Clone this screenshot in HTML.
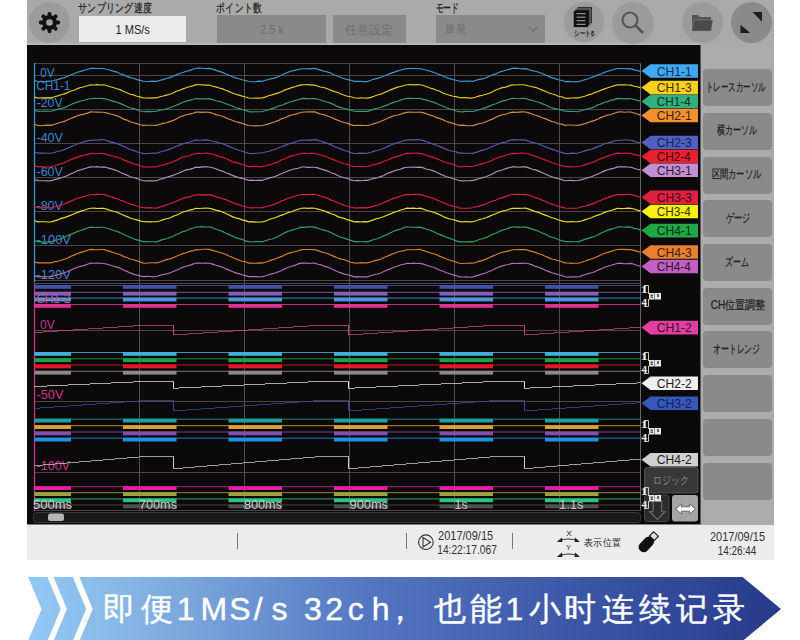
<!DOCTYPE html>
<html><head><meta charset="utf-8">
<style>
*{margin:0;padding:0;box-sizing:border-box}
html,body{width:800px;height:640px;overflow:hidden;background:#fff;font-family:"Liberation Sans", sans-serif}
.a{position:absolute}
.circ{position:absolute;border-radius:50%;background:#9b9b9b}
.btn{position:absolute;left:703px;width:69px;height:37px;background:#8a8a8a;border-radius:4px}
</style></head><body>
<div class="a" style="left:27px;top:0;width:747px;height:45px;background:#aaaaaa"></div>
<div class="a" style="left:27px;top:43px;width:673px;height:2px;background:#b8b8b8"></div>
<div class="a" style="left:700px;top:45px;width:74px;height:480px;background:#acacac"></div>
<div class="a" style="left:27px;top:524.5px;width:747px;height:35px;background:#ececec"></div>
<div class="circ" style="left:29px;top:2px;width:41px;height:41px"></div>
<svg class="a" style="left:37.4px;top:10px" width="25" height="25" viewBox="-12.5 -12.5 25 25"><g fill="#111"><rect x="-1.9" y="-10.6" width="3.8" height="6" rx="1.6" transform="rotate(0)"/><rect x="-1.9" y="-10.6" width="3.8" height="6" rx="1.6" transform="rotate(45)"/><rect x="-1.9" y="-10.6" width="3.8" height="6" rx="1.6" transform="rotate(90)"/><rect x="-1.9" y="-10.6" width="3.8" height="6" rx="1.6" transform="rotate(135)"/><rect x="-1.9" y="-10.6" width="3.8" height="6" rx="1.6" transform="rotate(180)"/><rect x="-1.9" y="-10.6" width="3.8" height="6" rx="1.6" transform="rotate(225)"/><rect x="-1.9" y="-10.6" width="3.8" height="6" rx="1.6" transform="rotate(270)"/><rect x="-1.9" y="-10.6" width="3.8" height="6" rx="1.6" transform="rotate(315)"/><circle r="7.4"/></g><circle r="3.3" fill="#a0a0a0"/></svg>
<div class="a" style="left:79.4px;top:15.6px;width:106.6px;height:26.8px;background:#ececec"></div>
<div class="a" style="left:217px;top:15px;width:109px;height:28px;background:#8a8a8a"></div>
<div class="a" style="left:333px;top:15px;width:73px;height:28px;background:#8a8a8a"></div>
<div class="a" style="left:435.5px;top:14.6px;width:109.5px;height:28.4px;background:#8a8a8a"></div>
<svg class="a" style="left:0;top:0" width="560" height="45"><path d="M528.5,26.8 L533.2,31.2 L538,26.8" fill="none" stroke="#747474" stroke-width="1.3"/></svg>
<div class="circ" style="left:564px;top:1.5px;width:40.4px;height:40.4px"></div>
<svg class="a" style="left:0;top:0" width="800" height="45">
<rect x="577.6" y="7" width="14.4" height="16.2" fill="#333"/>
<rect x="576.3" y="8.3" width="14.4" height="16.2" fill="#222" stroke="#888" stroke-width="0.5"/>
<rect x="575" y="9.6" width="14.4" height="16.2" fill="#1a1a1a" stroke="#888" stroke-width="0.5"/>
<rect x="573.7" y="10.9" width="14.4" height="16.2" fill="#111"/>
<g stroke="#b0b0b0" stroke-width="1"><line x1="576.5" y1="13.7" x2="585.5" y2="13.7"/><line x1="576.5" y1="17.2" x2="585.5" y2="17.2"/><line x1="576.5" y1="20.7" x2="585.5" y2="20.7"/><line x1="576.5" y1="24.3" x2="585.5" y2="24.3"/></g>
</svg>
<div class="circ" style="left:612px;top:1.5px;width:42px;height:42px"></div>
<svg class="a" style="left:618px;top:8px" width="30" height="30"><circle cx="12" cy="12" r="7.5" fill="none" stroke="#555" stroke-width="2.2"/><line x1="17.5" y1="17.5" x2="25" y2="25" stroke="#555" stroke-width="2.6"/></svg>
<div class="circ" style="left:681.5px;top:1.5px;width:41px;height:41px"></div>
<svg class="a" style="left:690px;top:13px" width="25" height="20"><path d="M2,2 H8 L10,4 H21 V18 H2 Z" fill="#555"/><path d="M4,7 H23 L21,18 H2 Z" fill="#4a4a4a" stroke="#888" stroke-width="0.5"/></svg>
<div class="circ" style="left:730.5px;top:1.5px;width:41.5px;height:41.5px;background:#8a8a8a"></div>
<svg class="a" style="left:730px;top:0" width="42" height="45"><path d="M22.5,12 H32 V21.7 Z" fill="#251820"/><path d="M10.5,24.7 V33 H20.2 Z" fill="#251820"/></svg>
<div class="btn" style="top:69.2px"></div><div class="btn" style="top:112.9px"></div><div class="btn" style="top:156.6px"></div><div class="btn" style="top:200.3px"></div><div class="btn" style="top:244.0px"></div><div class="btn" style="top:287.7px"></div><div class="btn" style="top:331.4px"></div><div class="btn" style="top:375.1px"></div><div class="btn" style="top:418.8px"></div><div class="btn" style="top:462.5px"></div>
<svg class="a" style="left:0;top:0" width="800" height="640">
<rect x="27" y="45" width="673.5" height="479.5" fill="#0b0909"/>
<line x1="34.5" y1="63.5" x2="640.5" y2="63.5" stroke="#4e4646" stroke-width="1"/>
<line x1="34.5" y1="75.5" x2="640.5" y2="75.5" stroke="#4e4646" stroke-width="1"/>
<line x1="34.5" y1="109.5" x2="640.5" y2="109.5" stroke="#4e4646" stroke-width="1"/>
<line x1="34.5" y1="143.5" x2="640.5" y2="143.5" stroke="#4e4646" stroke-width="1"/>
<line x1="34.5" y1="177.5" x2="640.5" y2="177.5" stroke="#4e4646" stroke-width="1"/>
<line x1="34.5" y1="211.5" x2="640.5" y2="211.5" stroke="#4e4646" stroke-width="1"/>
<line x1="34.5" y1="245.5" x2="640.5" y2="245.5" stroke="#4e4646" stroke-width="1"/>
<line x1="34.5" y1="280.5" x2="640.5" y2="280.5" stroke="#4e4646" stroke-width="1"/>
<line x1="34.5" y1="283.5" x2="640.5" y2="283.5" stroke="#4e4646" stroke-width="1"/>
<line x1="34.5" y1="330.5" x2="640.5" y2="330.5" stroke="#4e4646" stroke-width="1"/>
<line x1="34.5" y1="401.5" x2="640.5" y2="401.5" stroke="#4e4646" stroke-width="1"/>
<line x1="34.5" y1="472.5" x2="640.5" y2="472.5" stroke="#4e4646" stroke-width="1"/>
<line x1="34.5" y1="510.5" x2="640.5" y2="510.5" stroke="#4e4646" stroke-width="1"/>
<line x1="139.5" y1="63.5" x2="139.5" y2="510.5" stroke="#504c4c" stroke-width="1"/>
<line x1="244.5" y1="63.5" x2="244.5" y2="510.5" stroke="#504c4c" stroke-width="1"/>
<line x1="349.5" y1="63.5" x2="349.5" y2="510.5" stroke="#504c4c" stroke-width="1"/>
<line x1="454.5" y1="63.5" x2="454.5" y2="510.5" stroke="#504c4c" stroke-width="1"/>
<line x1="559.5" y1="63.5" x2="559.5" y2="510.5" stroke="#504c4c" stroke-width="1"/>
<line x1="640.5" y1="63.5" x2="640.5" y2="510.5" stroke="#6a6464" stroke-width="1"/>
<line x1="34.5" y1="63" x2="34.5" y2="282" stroke="#3a9ad8" stroke-width="1.3"/>
<line x1="34.5" y1="283" x2="34.5" y2="511" stroke="#c83888" stroke-width="1.3"/>
<text transform="translate(40.20,76.50) scale(0.987,1)" font-size="12" font-family="'Liberation Sans', sans-serif" font-weight="normal" fill="#3a86cc">0V</text>
<text transform="translate(36.25,90.33) scale(0.987,1)" font-size="12" font-family="'Liberation Sans', sans-serif" font-weight="normal" fill="#3a86cc">CH1-1</text>
<text transform="translate(36.75,107.45) scale(1.018,1)" font-size="12" font-family="'Liberation Sans', sans-serif" font-weight="normal" fill="#3a86cc">-20V</text>
<text transform="translate(36.50,142.15) scale(1.040,1)" font-size="12" font-family="'Liberation Sans', sans-serif" font-weight="normal" fill="#3a86cc">-40V</text>
<text transform="translate(36.50,176.35) scale(1.040,1)" font-size="12" font-family="'Liberation Sans', sans-serif" font-weight="normal" fill="#3a86cc">-60V</text>
<text transform="translate(36.50,210.20) scale(1.040,1)" font-size="12" font-family="'Liberation Sans', sans-serif" font-weight="normal" fill="#3a86cc">-80V</text>
<text transform="translate(36.50,244.30) scale(1.078,1)" font-size="12" font-family="'Liberation Sans', sans-serif" font-weight="normal" fill="#3a86cc">-100V</text>
<text transform="translate(36.50,278.65) scale(1.069,1)" font-size="12" font-family="'Liberation Sans', sans-serif" font-weight="normal" fill="#3a86cc">-120V</text>
<text transform="translate(40.00,329.15) scale(1.000,1)" font-size="12" font-family="'Liberation Sans', sans-serif" font-weight="normal" fill="#c83888">0V</text>
<text transform="translate(36.50,399.20) scale(1.060,1)" font-size="12" font-family="'Liberation Sans', sans-serif" font-weight="normal" fill="#c83888">-50V</text>
<text transform="translate(36.50,470.40) scale(1.047,1)" font-size="12" font-family="'Liberation Sans', sans-serif" font-weight="normal" fill="#c83888">-100V</text>
<polyline points="34.5,80.3 38.0,81.5 41.3,81.3 44.6,81.7 47.9,81.1 51.2,81.2 54.5,80.3 57.8,79.6 61.1,78.4 64.4,77.7 67.7,76.3 70.9,74.7 74.2,73.7 77.5,72.3 80.8,71.4 84.1,70.3 87.4,69.5 90.7,68.3 94.0,68.3 97.3,68.5 100.6,68.5 103.9,68.5 107.2,69.5 110.5,70.3 113.8,71.4 117.1,72.1 120.4,73.7 123.7,74.9 126.9,76.4 130.2,77.6 133.5,78.3 136.8,79.6 140.1,80.4 143.4,81.2 146.7,81.5 150.0,81.4 153.3,81.1 156.6,81.3 159.9,80.3 163.2,79.6 166.5,78.3 169.8,77.6 173.1,76.3 176.3,74.9 179.6,73.5 182.9,72.5 186.2,71.2 189.5,70.6 192.8,69.2 196.1,68.3 199.4,68.2 202.7,68.3 206.0,68.6 209.3,68.4 212.6,69.1 215.9,70.4 219.2,71.4 222.5,72.4 225.8,74.0 229.1,75.3 232.3,76.7 235.6,77.9 238.9,78.7 242.2,79.7 245.5,80.5 248.8,81.5 252.1,81.7 255.4,81.7 258.7,81.2 262.0,81.4 265.3,80.3 268.6,79.5 271.9,78.6 275.2,77.9 278.5,76.5 281.8,75.1 285.0,73.4 288.3,72.1 291.6,71.0 294.9,70.4 298.2,69.5 301.5,68.7 304.8,68.7 308.1,68.8 311.4,68.6 314.7,68.4 318.0,69.4 321.3,70.4 324.6,71.3 327.9,72.1 331.2,73.2 334.5,75.1 337.7,76.3 341.0,77.5 344.3,78.7 347.6,79.6 350.9,80.3 354.2,81.4 357.5,81.4 360.8,81.3 364.1,81.6 367.4,81.6 370.7,80.3 374.0,79.3 377.3,78.4 380.6,77.5 383.9,76.0 387.1,74.8 390.4,73.4 393.7,72.4 397.0,71.1 400.3,70.3 403.6,69.3 406.9,68.6 410.2,68.5 413.5,68.3 416.8,68.7 420.1,68.5 423.4,69.5 426.7,70.2 430.0,71.2 433.3,72.3 436.6,73.5 439.9,74.8 443.1,76.0 446.4,77.5 449.7,78.6 453.0,79.6 456.3,80.3 459.6,81.2 462.9,81.3 466.2,81.0 469.5,81.1 472.8,81.3 476.1,80.3 479.4,79.4 482.7,78.9 486.0,77.8 489.3,76.2 492.6,74.7 495.8,73.9 499.1,72.3 502.4,71.3 505.7,70.2 509.0,69.4 512.3,68.4 515.6,68.2 518.9,68.5 522.2,68.8 525.5,68.6 528.8,69.7 532.1,70.6 535.4,71.2 538.7,72.3 542.0,73.5 545.2,74.7 548.5,76.4 551.8,77.6 555.1,78.6 558.4,79.8 561.7,80.5 565.0,81.6 568.3,81.4 571.6,81.8 574.9,81.9 578.2,81.6 581.5,80.8 584.8,79.7 588.1,78.7 591.4,77.5 594.7,76.4 598.0,74.8 601.2,73.7 604.5,72.4 607.8,71.3 611.1,70.2 614.4,69.2 617.7,68.5 621.0,68.5 624.3,68.5 627.6,68.8 630.9,68.7 634.1,69.9 637.3,70.5 640.5,71.4" fill="none" stroke="#4298cc" stroke-width="1.15"/>
<polyline points="34.5,97.1 38.0,98.1 41.3,97.8 44.6,97.8 47.9,97.7 51.2,97.8 54.5,96.7 57.8,95.9 61.1,94.8 64.4,93.9 67.7,92.6 70.9,91.0 74.2,90.2 77.5,88.6 80.8,87.5 84.1,86.7 87.4,85.8 90.7,84.8 94.0,85.0 97.3,84.7 100.6,85.0 103.9,84.8 107.2,85.8 110.5,86.8 113.8,87.8 117.1,88.8 120.4,89.9 123.7,91.5 126.9,92.7 130.2,94.3 133.5,94.9 136.8,96.3 140.1,96.9 143.4,98.0 146.7,98.0 150.0,98.1 153.3,97.9 156.6,97.9 159.9,96.8 163.2,96.0 166.5,95.1 169.8,94.2 173.1,93.0 176.3,91.3 179.6,90.2 182.9,88.9 186.2,87.7 189.5,86.7 192.8,85.9 196.1,84.7 199.4,84.8 202.7,84.9 206.0,85.1 209.3,85.0 212.6,86.2 215.9,86.9 219.2,88.0 222.5,88.9 225.8,90.3 229.1,91.6 232.3,93.0 235.6,94.2 238.9,95.1 242.2,96.1 245.5,97.0 248.8,98.0 252.1,98.2 255.4,98.0 258.7,98.1 262.0,97.9 265.3,97.1 268.6,95.7 271.9,94.9 275.2,93.9 278.5,92.9 281.8,91.6 285.0,89.9 288.3,88.9 291.6,87.6 294.9,86.8 298.2,85.6 301.5,84.9 304.8,84.8 308.1,84.7 311.4,85.1 314.7,85.1 318.0,86.2 321.3,87.3 324.6,87.8 327.9,89.0 331.2,90.4 334.5,91.6 337.7,92.5 341.0,94.0 344.3,95.2 347.6,96.2 350.9,96.7 354.2,97.8 357.5,98.2 360.8,97.9 364.1,98.0 367.4,98.1 370.7,97.4 374.0,96.3 377.3,95.0 380.6,94.2 383.9,92.7 387.1,91.4 390.4,89.9 393.7,88.6 397.0,87.4 400.3,86.5 403.6,85.8 406.9,84.8 410.2,84.5 413.5,84.8 416.8,84.7 420.1,84.8 423.4,85.5 426.7,86.7 430.0,88.0 433.3,88.9 436.6,90.3 439.9,91.3 443.1,93.2 446.4,94.2 449.7,95.3 453.0,96.2 456.3,96.6 459.6,97.7 462.9,97.6 466.2,97.6 469.5,98.1 472.8,98.0 476.1,97.0 479.4,95.9 482.7,95.2 486.0,94.3 489.3,93.2 492.6,91.8 495.8,90.0 499.1,88.8 502.4,87.6 505.7,87.1 509.0,85.9 512.3,84.9 515.6,85.0 518.9,84.7 522.2,84.7 525.5,85.0 528.8,86.0 532.1,86.7 535.4,87.4 538.7,88.5 542.0,90.1 545.2,91.3 548.5,92.7 551.8,93.8 555.1,94.7 558.4,96.2 561.7,96.8 565.0,98.1 568.3,98.3 571.6,98.0 574.9,97.9 578.2,97.9 581.5,97.0 584.8,96.3 588.1,94.9 591.4,94.1 594.7,92.6 598.0,91.5 601.2,90.1 604.5,88.9 607.8,87.7 611.1,86.7 614.4,85.6 617.7,84.9 621.0,84.8 624.3,84.9 627.6,85.0 630.9,85.1 634.1,86.2 637.3,86.8 640.5,87.9" fill="none" stroke="#e0c828" stroke-width="1.15"/>
<polyline points="34.5,110.3 38.0,111.4 41.3,111.3 44.6,111.0 47.9,111.2 51.2,111.2 54.5,110.3 57.8,109.4 61.1,108.3 64.4,107.6 67.7,106.2 70.9,104.5 74.2,103.3 77.5,102.1 80.8,101.0 84.1,100.3 87.4,99.2 90.7,98.7 94.0,98.3 97.3,98.5 100.6,98.4 103.9,98.6 107.2,99.5 110.5,100.4 113.8,101.4 117.1,102.2 120.4,103.6 123.7,105.0 126.9,106.5 130.2,107.7 133.5,108.6 136.8,109.6 140.1,111.0 143.4,111.7 146.7,111.4 150.0,111.6 153.3,111.5 156.6,111.3 159.9,110.1 163.2,109.8 166.5,108.9 169.8,107.8 173.1,106.5 176.3,105.2 179.6,103.9 182.9,102.3 186.2,101.1 189.5,100.4 192.8,99.5 196.1,98.5 199.4,98.8 202.7,98.8 206.0,98.9 209.3,98.7 212.6,99.6 215.9,100.7 219.2,101.5 222.5,102.3 225.8,103.7 229.1,104.8 232.3,106.0 235.6,107.7 238.9,108.4 242.2,109.5 245.5,110.4 248.8,111.6 252.1,111.8 255.4,111.7 258.7,111.7 262.0,111.7 265.3,110.8 268.6,109.8 271.9,108.6 275.2,107.6 278.5,106.0 281.8,105.2 285.0,103.9 288.3,102.5 291.6,101.5 294.9,100.6 298.2,99.7 301.5,98.6 304.8,98.4 308.1,98.8 311.4,98.5 314.7,98.6 318.0,99.3 321.3,100.3 324.6,101.5 327.9,102.3 331.2,103.4 334.5,105.1 337.7,106.6 341.0,107.6 344.3,108.5 347.6,109.4 350.9,110.3 354.2,111.2 357.5,111.4 360.8,111.4 364.1,111.3 367.4,111.3 370.7,110.4 374.0,109.1 377.3,108.2 380.6,107.5 383.9,106.1 387.1,105.1 390.4,103.6 393.7,102.4 397.0,101.5 400.3,100.1 403.6,99.2 406.9,98.4 410.2,98.3 413.5,98.5 416.8,98.5 420.1,98.4 423.4,99.4 426.7,100.1 430.0,101.2 433.3,102.1 436.6,103.5 439.9,105.0 443.1,106.2 446.4,107.8 449.7,109.0 453.0,109.6 456.3,111.0 459.6,111.6 462.9,111.9 466.2,111.3 469.5,111.5 472.8,111.5 476.1,110.7 479.4,109.8 482.7,108.5 486.0,107.6 489.3,106.1 492.6,104.7 495.8,103.8 499.1,102.2 502.4,101.1 505.7,100.4 509.0,99.2 512.3,98.4 515.6,98.5 518.9,98.7 522.2,98.3 525.5,98.5 528.8,99.6 532.1,100.3 535.4,101.5 538.7,102.2 542.0,103.6 545.2,104.7 548.5,106.5 551.8,107.7 555.1,108.6 558.4,109.2 561.7,110.1 565.0,111.3 568.3,111.4 571.6,111.5 574.9,111.5 578.2,111.7 581.5,110.5 584.8,109.7 588.1,108.7 591.4,107.9 594.7,106.7 598.0,104.8 601.2,103.9 604.5,102.3 607.8,101.6 611.1,100.1 614.4,99.6 617.7,98.4 621.0,98.6 624.3,98.8 627.6,98.6 630.9,98.8 634.1,99.5 637.3,100.4 640.5,101.3" fill="none" stroke="#3a9c78" stroke-width="1.15"/>
<polyline points="34.5,124.5 38.0,125.4 41.3,125.7 44.6,125.4 47.9,125.2 51.2,125.4 54.5,124.2 57.8,123.2 61.1,122.3 64.4,121.4 67.7,119.8 70.9,118.5 74.2,117.1 77.5,115.8 80.8,114.9 84.1,114.1 87.4,113.1 90.7,111.9 94.0,112.0 97.3,112.1 100.6,112.2 103.9,112.3 107.2,113.1 110.5,114.0 113.8,114.8 117.1,115.9 120.4,117.3 123.7,119.1 126.9,120.1 130.2,121.8 133.5,122.7 136.8,123.6 140.1,124.7 143.4,125.3 146.7,125.2 150.0,125.2 153.3,125.2 156.6,125.3 159.9,124.3 163.2,123.4 166.5,122.8 169.8,121.6 173.1,120.4 176.3,118.9 179.6,117.0 182.9,115.9 186.2,114.7 189.5,114.1 192.8,113.3 196.1,112.1 199.4,112.1 202.7,112.3 206.0,112.0 209.3,112.4 212.6,113.3 215.9,114.6 219.2,115.5 222.5,116.2 225.8,117.8 229.1,119.3 232.3,120.2 235.6,121.7 238.9,122.4 242.2,123.4 245.5,124.6 248.8,125.5 252.1,125.7 255.4,125.9 258.7,125.8 262.0,125.7 265.3,124.8 268.6,123.9 271.9,122.7 275.2,121.8 278.5,120.4 281.8,118.6 285.0,117.7 288.3,116.1 291.6,115.0 294.9,114.4 298.2,113.3 301.5,112.3 304.8,112.0 308.1,111.9 311.4,111.9 314.7,111.9 318.0,113.1 321.3,114.2 324.6,114.9 327.9,116.2 331.2,117.2 334.5,118.9 337.7,120.2 341.0,121.5 344.3,122.5 347.6,123.4 350.9,124.6 354.2,125.6 357.5,125.3 360.8,125.4 364.1,125.5 367.4,125.5 370.7,124.8 374.0,123.6 377.3,122.7 380.6,121.5 383.9,120.0 387.1,118.5 390.4,117.1 393.7,115.8 397.0,115.2 400.3,114.2 403.6,113.1 406.9,112.4 410.2,112.0 413.5,112.2 416.8,112.2 420.1,112.0 423.4,112.9 426.7,113.8 430.0,115.1 433.3,116.0 436.6,117.6 439.9,118.6 443.1,119.8 446.4,121.5 449.7,122.4 453.0,123.4 456.3,124.5 459.6,125.4 462.9,125.2 466.2,125.6 469.5,125.7 472.8,125.6 476.1,124.6 479.4,123.5 482.7,123.0 486.0,121.8 489.3,120.2 492.6,119.1 495.8,117.2 499.1,115.9 502.4,114.8 505.7,114.2 509.0,113.0 512.3,112.2 515.6,112.4 518.9,112.1 522.2,111.9 525.5,112.0 528.8,112.9 532.1,114.0 535.4,115.2 538.7,116.1 542.0,117.7 545.2,118.6 548.5,120.1 551.8,121.5 555.1,122.3 558.4,123.7 561.7,124.1 565.0,125.3 568.3,125.0 571.6,125.0 574.9,125.2 578.2,125.3 581.5,124.6 584.8,123.6 588.1,122.5 591.4,121.4 594.7,120.4 598.0,119.1 601.2,117.4 604.5,116.2 607.8,115.0 611.1,114.5 614.4,113.3 617.7,112.1 621.0,111.8 624.3,112.2 627.6,112.0 630.9,112.0 634.1,113.0 637.3,114.0 640.5,115.1" fill="none" stroke="#d48c44" stroke-width="1.15"/>
<polyline points="34.5,152.0 38.0,153.1 41.3,153.0 44.6,153.1 47.9,153.2 51.2,153.2 54.5,152.5 57.8,151.2 61.1,150.7 64.4,149.6 67.7,148.2 70.9,146.8 74.2,145.3 77.5,143.7 80.8,142.8 84.1,141.8 87.4,140.9 90.7,140.2 94.0,140.0 97.3,140.2 100.6,139.6 103.9,139.8 107.2,140.6 110.5,141.9 113.8,142.6 117.1,143.8 120.4,144.9 123.7,146.4 126.9,148.1 130.2,149.5 133.5,150.4 136.8,151.8 140.1,152.7 143.4,153.4 146.7,153.7 150.0,153.2 153.3,153.0 156.6,153.2 159.9,152.0 163.2,151.2 166.5,150.3 169.8,149.1 173.1,147.8 176.3,146.3 179.6,145.1 182.9,143.8 186.2,142.9 189.5,142.0 192.8,141.0 196.1,139.9 199.4,140.2 202.7,140.1 206.0,139.9 209.3,140.2 212.6,141.2 215.9,141.8 219.2,142.8 222.5,143.7 225.8,145.0 229.1,146.6 232.3,147.7 235.6,149.3 238.9,150.2 242.2,151.2 245.5,152.2 248.8,153.5 252.1,153.6 255.4,153.3 258.7,153.0 262.0,153.0 265.3,152.0 268.6,151.5 271.9,150.2 275.2,149.3 278.5,147.8 281.8,146.8 285.0,145.4 288.3,144.0 291.6,143.3 294.9,141.8 298.2,141.0 301.5,140.1 304.8,140.2 308.1,140.1 311.4,140.1 314.7,139.7 318.0,140.4 321.3,141.5 324.6,142.4 327.9,143.6 331.2,144.8 334.5,146.7 337.7,147.8 341.0,149.1 344.3,150.5 347.6,151.2 350.9,152.6 354.2,153.5 357.5,153.4 360.8,153.2 364.1,153.4 367.4,153.1 370.7,152.5 374.0,151.1 377.3,150.5 380.6,149.5 383.9,148.2 387.1,146.6 390.4,145.3 393.7,144.0 397.0,142.8 400.3,141.8 403.6,140.8 406.9,139.9 410.2,139.9 413.5,139.9 416.8,139.7 420.1,139.8 423.4,140.6 426.7,141.8 430.0,143.1 433.3,144.1 436.6,145.2 439.9,146.6 443.1,147.9 446.4,149.4 449.7,150.5 453.0,151.3 456.3,151.9 459.6,153.1 462.9,153.0 466.2,153.2 469.5,153.3 472.8,153.4 476.1,152.4 479.4,151.1 482.7,150.1 486.0,149.3 489.3,148.0 492.6,146.4 495.8,145.0 499.1,143.7 502.4,142.6 505.7,142.0 509.0,140.6 512.3,139.7 515.6,139.8 518.9,139.8 522.2,139.9 525.5,140.1 528.8,141.3 532.1,142.4 535.4,143.0 538.7,144.0 542.0,145.2 545.2,146.9 548.5,147.9 551.8,149.4 555.1,150.1 558.4,151.7 561.7,152.4 565.0,153.5 568.3,153.6 571.6,153.2 574.9,153.4 578.2,153.0 581.5,152.0 584.8,150.9 588.1,149.9 591.4,149.2 594.7,147.9 598.0,146.6 601.2,145.4 604.5,143.8 607.8,142.7 611.1,142.1 614.4,141.0 617.7,140.2 621.0,140.2 624.3,140.0 627.6,140.0 630.9,140.2 634.1,141.1 637.3,142.2 640.5,142.8" fill="none" stroke="#5a5ab0" stroke-width="1.15"/>
<polyline points="34.5,165.6 38.0,166.8 41.3,166.7 44.6,167.0 47.9,167.0 51.2,166.9 54.5,165.8 57.8,164.6 61.1,163.7 64.4,162.6 67.7,161.0 70.9,159.6 74.2,158.4 77.5,157.1 80.8,155.9 84.1,155.3 87.4,154.4 90.7,153.6 94.0,153.3 97.3,153.7 100.6,153.3 103.9,153.6 107.2,154.6 110.5,155.6 113.8,156.3 117.1,157.2 120.4,158.3 123.7,159.9 126.9,161.1 130.2,162.5 133.5,163.9 136.8,164.5 140.1,166.0 143.4,166.9 146.7,167.1 150.0,166.9 153.3,166.9 156.6,166.6 159.9,165.5 163.2,165.1 166.5,163.9 169.8,163.0 173.1,161.8 176.3,160.4 179.6,158.5 182.9,157.3 186.2,156.5 189.5,155.7 192.8,154.2 196.1,153.5 199.4,153.3 202.7,153.5 206.0,153.0 209.3,153.2 212.6,154.5 215.9,155.1 219.2,156.5 222.5,157.4 225.8,158.5 229.1,160.0 232.3,161.6 235.6,162.6 238.9,163.4 242.2,164.5 245.5,165.6 248.8,166.6 252.1,166.6 255.4,166.4 258.7,166.6 262.0,166.8 265.3,165.7 268.6,165.1 271.9,164.0 275.2,162.9 278.5,161.7 281.8,159.8 285.0,158.7 288.3,157.1 291.6,155.9 294.9,155.2 298.2,154.3 301.5,153.2 304.8,153.1 308.1,153.5 311.4,153.3 314.7,153.3 318.0,154.3 321.3,155.5 324.6,156.0 327.9,157.3 331.2,158.9 334.5,160.1 337.7,161.3 341.0,162.7 344.3,163.8 347.6,164.4 350.9,165.8 354.2,166.5 357.5,166.5 360.8,166.4 364.1,166.7 367.4,166.5 370.7,165.6 374.0,164.5 377.3,163.9 380.6,162.9 383.9,161.2 387.1,160.3 390.4,158.7 393.7,157.4 397.0,156.4 400.3,155.6 403.6,154.2 406.9,153.1 410.2,153.3 413.5,153.1 416.8,153.0 420.1,153.4 423.4,154.1 426.7,155.2 430.0,156.4 433.3,157.4 436.6,158.6 439.9,160.0 443.1,161.5 446.4,162.5 449.7,163.4 453.0,164.5 456.3,165.8 459.6,166.8 462.9,166.5 466.2,166.3 469.5,166.5 472.8,166.5 476.1,165.3 479.4,164.6 482.7,163.6 486.0,162.8 489.3,161.5 492.6,160.1 495.8,158.5 499.1,157.3 502.4,156.4 505.7,155.3 509.0,154.2 512.3,153.4 515.6,153.6 518.9,153.2 522.2,153.1 525.5,153.2 528.8,154.0 532.1,155.3 535.4,156.4 538.7,157.2 542.0,158.8 545.2,159.9 548.5,161.3 551.8,162.8 555.1,163.5 558.4,164.8 561.7,165.7 565.0,166.6 568.3,166.6 571.6,166.8 574.9,166.7 578.2,166.7 581.5,166.0 584.8,164.9 588.1,163.6 591.4,162.7 594.7,161.6 598.0,159.7 601.2,158.6 604.5,157.2 607.8,156.1 611.1,155.0 614.4,153.9 617.7,153.1 621.0,153.3 624.3,153.0 627.6,153.4 630.9,153.4 634.1,154.6 637.3,155.1 640.5,156.2" fill="none" stroke="#d81838" stroke-width="1.15"/>
<polyline points="34.5,179.5 38.0,180.6 41.3,180.7 44.6,180.7 47.9,180.9 51.2,180.6 54.5,179.6 57.8,178.9 61.1,177.8 64.4,176.8 67.7,175.5 70.9,173.8 74.2,172.5 77.5,170.8 80.8,169.9 84.1,168.8 87.4,167.7 90.7,166.9 94.0,167.0 97.3,166.7 100.6,167.2 103.9,166.9 107.2,167.7 110.5,168.6 113.8,169.6 117.1,170.8 120.4,172.5 123.7,173.7 126.9,175.1 130.2,176.8 133.5,177.5 136.8,178.5 140.1,179.8 143.4,180.7 146.7,180.8 150.0,180.8 153.3,180.8 156.6,180.7 159.9,179.3 163.2,178.6 166.5,177.3 169.8,176.4 173.1,175.2 176.3,174.0 179.6,172.7 182.9,171.2 186.2,169.9 189.5,169.4 192.8,168.4 196.1,167.2 199.4,167.4 202.7,166.9 206.0,166.9 209.3,167.0 212.6,167.8 215.9,168.8 219.2,170.3 222.5,171.1 225.8,172.7 229.1,173.9 232.3,175.4 235.6,176.6 238.9,177.6 242.2,178.4 245.5,179.2 248.8,180.4 252.1,180.2 255.4,180.5 258.7,180.2 262.0,180.4 265.3,179.3 268.6,178.4 271.9,177.2 275.2,176.5 278.5,174.9 281.8,173.5 285.0,172.3 288.3,170.8 291.6,169.7 294.9,168.8 298.2,168.2 301.5,167.0 304.8,167.0 308.1,167.3 311.4,167.2 314.7,167.2 318.0,167.9 321.3,169.1 324.6,170.1 327.9,171.1 331.2,172.7 334.5,173.8 337.7,175.5 341.0,176.8 344.3,177.8 347.6,178.5 350.9,179.9 354.2,180.7 357.5,180.4 360.8,180.7 364.1,180.3 367.4,180.4 370.7,179.2 374.0,178.4 377.3,177.7 380.6,176.6 383.9,175.5 387.1,173.5 390.4,172.4 393.7,171.0 397.0,170.0 400.3,169.3 403.6,167.9 406.9,167.2 410.2,167.2 413.5,167.0 416.8,167.3 420.1,167.1 423.4,167.9 426.7,169.2 430.0,169.8 433.3,170.9 436.6,172.2 439.9,173.9 443.1,175.2 446.4,176.7 449.7,177.5 453.0,178.8 456.3,179.5 459.6,180.8 462.9,180.9 466.2,180.7 469.5,180.7 472.8,180.4 476.1,179.6 479.4,178.5 482.7,177.6 486.0,176.8 489.3,175.2 492.6,174.0 495.8,172.0 499.1,170.8 502.4,170.0 505.7,168.6 509.0,167.7 512.3,166.9 515.6,166.8 518.9,167.2 522.2,166.9 525.5,166.9 528.8,167.9 532.1,169.2 535.4,169.9 538.7,171.1 542.0,172.5 545.2,174.0 548.5,175.5 551.8,176.8 555.1,177.9 558.4,178.8 561.7,179.6 565.0,180.7 568.3,180.5 571.6,180.4 574.9,180.7 578.2,180.5 581.5,179.6 584.8,178.8 588.1,177.5 591.4,176.8 594.7,175.3 598.0,174.0 601.2,172.4 604.5,170.9 607.8,169.7 611.1,168.9 614.4,168.1 617.7,166.9 621.0,166.8 624.3,166.9 627.6,167.0 630.9,167.2 634.1,168.3 637.3,169.3 640.5,170.0" fill="none" stroke="#b090c0" stroke-width="1.15"/>
<polyline points="34.5,206.6 38.0,207.7 41.3,207.8 44.6,207.5 47.9,207.7 51.2,207.8 54.5,207.0 57.8,206.0 61.1,205.0 64.4,204.0 67.7,202.4 70.9,201.1 74.2,199.7 77.5,198.3 80.8,197.4 84.1,196.3 87.4,195.5 90.7,194.5 94.0,194.7 97.3,194.2 100.6,194.5 103.9,194.4 107.2,195.6 110.5,196.5 113.8,197.6 117.1,198.7 120.4,200.3 123.7,201.1 126.9,202.8 130.2,204.1 133.5,204.8 136.8,206.0 140.1,207.0 143.4,207.7 146.7,207.8 150.0,207.6 153.3,208.0 156.6,208.1 159.9,207.0 163.2,206.1 166.5,204.8 169.8,203.8 173.1,202.5 176.3,201.3 179.6,199.7 182.9,198.4 186.2,197.4 189.5,196.9 192.8,195.5 196.1,194.8 199.4,194.9 202.7,194.7 206.0,194.9 209.3,194.7 212.6,195.4 215.9,196.9 219.2,197.5 222.5,198.6 225.8,199.6 229.1,201.1 232.3,202.5 235.6,203.9 238.9,204.6 242.2,205.8 245.5,206.7 248.8,207.7 252.1,207.9 255.4,207.7 258.7,207.7 262.0,207.9 265.3,206.7 268.6,206.0 271.9,205.1 275.2,203.8 278.5,202.4 281.8,200.9 285.0,199.8 288.3,198.3 291.6,197.3 294.9,196.2 298.2,195.2 301.5,194.5 304.8,194.6 308.1,194.6 311.4,194.4 314.7,194.3 318.0,195.3 321.3,196.4 324.6,197.2 327.9,198.4 331.2,200.1 334.5,201.2 337.7,202.8 341.0,204.1 344.3,205.3 347.6,206.2 350.9,207.0 354.2,208.0 357.5,207.8 360.8,207.9 364.1,207.7 367.4,207.9 370.7,207.1 374.0,205.9 377.3,205.2 380.6,204.0 383.9,202.5 387.1,201.1 390.4,199.7 393.7,198.4 397.0,197.4 400.3,196.2 403.6,195.1 406.9,194.4 410.2,194.6 413.5,194.3 416.8,194.4 420.1,194.6 423.4,195.4 426.7,196.5 430.0,197.4 433.3,198.4 436.6,199.9 439.9,201.3 443.1,202.6 446.4,204.1 449.7,205.3 453.0,206.3 456.3,206.8 459.6,208.1 462.9,208.2 466.2,208.2 469.5,208.1 472.8,207.8 476.1,206.7 479.4,206.1 482.7,205.0 486.0,204.0 489.3,202.3 492.6,201.0 495.8,200.2 499.1,198.6 502.4,197.6 505.7,196.4 509.0,195.3 512.3,194.5 515.6,194.3 518.9,194.3 522.2,194.6 525.5,194.4 528.8,195.3 532.1,196.3 535.4,197.8 538.7,198.6 542.0,200.1 545.2,201.2 548.5,203.0 551.8,204.1 555.1,205.2 558.4,206.2 561.7,207.1 565.0,208.0 568.3,208.2 571.6,208.2 574.9,208.2 578.2,208.0 581.5,206.8 584.8,206.2 588.1,205.1 591.4,204.1 594.7,202.9 598.0,201.3 601.2,200.2 604.5,198.5 607.8,197.6 611.1,196.4 614.4,195.4 617.7,194.6 621.0,194.4 624.3,194.6 627.6,194.3 630.9,194.5 634.1,195.4 637.3,196.2 640.5,197.3" fill="none" stroke="#d82040" stroke-width="1.15"/>
<polyline points="34.5,220.7 38.0,221.8 41.3,221.7 44.6,221.7 47.9,222.0 51.2,221.9 54.5,220.9 57.8,219.9 61.1,218.4 64.4,217.6 67.7,216.4 70.9,215.2 74.2,213.7 77.5,212.4 80.8,211.1 84.1,210.2 87.4,209.0 90.7,208.2 94.0,208.1 97.3,208.5 100.6,208.3 103.9,208.3 107.2,209.4 110.5,210.5 113.8,211.5 117.1,212.3 120.4,213.8 123.7,215.2 126.9,216.6 130.2,218.0 133.5,219.0 136.8,219.9 140.1,220.9 143.4,221.7 146.7,221.5 150.0,221.8 153.3,221.7 156.6,221.7 159.9,221.0 163.2,219.6 166.5,218.8 169.8,218.0 173.1,216.2 176.3,215.2 179.6,213.7 182.9,212.0 186.2,211.2 189.5,210.1 192.8,209.4 196.1,208.3 199.4,208.5 202.7,208.3 206.0,208.2 209.3,208.3 212.6,209.1 215.9,210.1 219.2,210.9 222.5,212.0 225.8,213.4 229.1,215.0 232.3,216.6 235.6,217.9 238.9,218.6 242.2,219.9 245.5,220.6 248.8,221.8 252.1,221.7 255.4,222.1 258.7,222.0 262.0,222.0 265.3,221.2 268.6,219.8 271.9,218.5 275.2,217.7 278.5,216.3 281.8,215.1 285.0,214.0 288.3,212.4 291.6,211.7 294.9,210.3 298.2,209.2 301.5,208.2 304.8,208.0 308.1,208.3 311.4,208.1 314.7,208.2 318.0,209.1 321.3,210.0 324.6,211.1 327.9,212.4 331.2,213.8 334.5,214.8 337.7,216.6 341.0,217.6 344.3,218.4 347.6,219.9 350.9,220.6 354.2,221.9 357.5,221.6 360.8,222.0 364.1,221.7 367.4,221.8 370.7,220.9 374.0,219.6 377.3,218.5 380.6,217.7 383.9,216.5 387.1,215.2 390.4,213.9 393.7,212.4 397.0,211.5 400.3,210.0 403.6,209.3 406.9,208.2 410.2,208.3 413.5,208.2 416.8,208.5 420.1,208.2 423.4,209.1 426.7,210.5 430.0,211.3 433.3,212.2 436.6,213.4 439.9,214.8 443.1,216.6 446.4,217.9 449.7,219.0 453.0,219.5 456.3,220.6 459.6,221.6 462.9,221.8 466.2,221.5 469.5,221.9 472.8,221.7 476.1,220.7 479.4,219.5 482.7,218.7 486.0,217.8 489.3,216.4 492.6,215.0 495.8,213.7 499.1,212.2 502.4,211.1 505.7,210.5 509.0,209.3 512.3,208.4 515.6,208.4 518.9,208.4 522.2,208.2 525.5,208.1 528.8,209.1 532.1,210.4 535.4,211.6 538.7,212.4 542.0,213.9 545.2,215.1 548.5,216.3 551.8,217.8 555.1,218.5 558.4,220.0 561.7,220.9 565.0,221.8 568.3,221.9 571.6,221.6 574.9,221.7 578.2,221.6 581.5,221.0 584.8,219.9 588.1,218.8 591.4,217.8 594.7,216.3 598.0,215.1 601.2,214.0 604.5,212.4 607.8,211.3 611.1,210.5 614.4,209.4 617.7,208.3 621.0,208.6 624.3,208.5 627.6,208.2 630.9,208.4 634.1,209.0 637.3,210.1 640.5,211.1" fill="none" stroke="#e8e020" stroke-width="1.15"/>
<polyline points="34.5,240.6 38.0,241.9 41.3,241.6 44.6,242.2 47.9,241.9 51.2,241.9 54.5,240.5 57.8,239.7 61.1,238.6 64.4,237.2 67.7,235.6 70.9,234.4 74.2,232.9 77.5,231.5 80.8,230.5 84.1,229.1 87.4,228.0 90.7,227.2 94.0,227.5 97.3,227.4 100.6,227.2 103.9,227.2 107.2,228.3 110.5,229.2 113.8,230.5 117.1,231.4 120.4,232.8 123.7,234.6 126.9,236.0 130.2,237.3 133.5,238.7 136.8,239.9 140.1,240.6 143.4,241.9 146.7,241.6 150.0,241.7 153.3,241.7 156.6,241.9 159.9,240.6 163.2,239.4 166.5,238.7 169.8,237.5 173.1,236.3 176.3,234.5 179.6,233.3 182.9,231.6 186.2,230.7 189.5,229.0 192.8,228.2 196.1,227.0 199.4,226.9 202.7,226.7 206.0,227.2 209.3,226.8 212.6,227.8 215.9,229.2 219.2,230.3 222.5,231.4 225.8,233.2 229.1,234.6 232.3,236.0 235.6,237.6 238.9,238.6 242.2,239.4 245.5,240.9 248.8,241.6 252.1,242.0 255.4,241.6 258.7,241.5 262.0,241.9 265.3,240.7 268.6,239.7 271.9,239.0 275.2,237.7 278.5,236.3 281.8,234.6 285.0,232.6 288.3,231.2 291.6,230.4 294.9,229.3 298.2,228.2 301.5,227.1 304.8,227.4 308.1,226.9 311.4,226.9 314.7,227.1 318.0,228.3 321.3,229.5 324.6,230.4 327.9,231.3 331.2,232.7 334.5,234.4 337.7,236.0 341.0,237.3 344.3,238.1 347.6,239.4 350.9,240.4 354.2,241.6 357.5,241.5 360.8,241.7 364.1,241.6 367.4,241.9 370.7,240.6 374.0,239.5 377.3,238.8 380.6,237.6 383.9,235.7 387.1,234.6 390.4,232.7 393.7,231.3 397.0,229.9 400.3,229.3 403.6,227.8 406.9,226.8 410.2,227.2 413.5,227.2 416.8,227.4 420.1,227.2 423.4,228.1 426.7,229.3 430.0,230.2 433.3,231.5 436.6,233.2 439.9,234.6 443.1,235.9 446.4,237.3 449.7,238.4 453.0,239.5 456.3,240.9 459.6,241.8 462.9,241.8 466.2,241.9 469.5,241.7 472.8,241.9 476.1,240.7 479.4,239.5 482.7,238.8 486.0,237.6 489.3,236.1 492.6,234.3 495.8,233.2 499.1,231.4 502.4,230.1 505.7,229.2 509.0,227.9 512.3,227.0 515.6,226.9 518.9,227.3 522.2,227.0 525.5,227.1 528.8,227.9 532.1,229.1 535.4,230.1 538.7,231.2 542.0,233.0 545.2,234.0 548.5,236.1 551.8,237.3 555.1,238.1 558.4,239.7 561.7,240.6 565.0,241.6 568.3,241.5 571.6,241.7 574.9,241.7 578.2,241.8 581.5,240.6 584.8,239.4 588.1,238.4 591.4,237.4 594.7,236.2 598.0,234.7 601.2,233.1 604.5,231.4 607.8,230.1 611.1,229.1 614.4,228.3 617.7,227.0 621.0,226.8 624.3,227.2 627.6,226.9 630.9,227.1 634.1,228.4 637.3,228.8 640.5,230.1" fill="none" stroke="#30a060" stroke-width="1.15"/>
<polyline points="34.5,262.0 38.0,262.9 41.3,262.9 44.6,262.8 47.9,262.8 51.2,262.8 54.5,261.7 57.8,261.2 61.1,260.3 64.4,259.3 67.7,258.0 70.9,256.3 74.2,255.1 77.5,253.5 80.8,252.4 84.1,251.6 87.4,250.2 90.7,249.4 94.0,249.6 97.3,249.7 100.6,249.5 103.9,249.5 107.2,250.6 110.5,251.6 113.8,252.7 117.1,253.7 120.4,254.7 123.7,256.6 126.9,257.5 130.2,259.0 133.5,259.8 136.8,260.8 140.1,261.9 143.4,263.1 146.7,263.2 150.0,262.7 153.3,262.7 156.6,262.9 159.9,262.0 163.2,260.7 166.5,259.6 169.8,258.9 173.1,257.7 176.3,256.3 179.6,255.0 182.9,253.6 186.2,252.8 189.5,251.4 192.8,250.9 196.1,249.6 199.4,249.7 202.7,249.2 206.0,249.2 209.3,249.4 212.6,250.4 215.9,251.3 219.2,252.2 222.5,253.3 225.8,254.5 229.1,256.0 232.3,257.3 235.6,258.9 238.9,260.0 242.2,261.2 245.5,261.8 248.8,263.1 252.1,263.1 255.4,263.2 258.7,262.9 262.0,263.1 265.3,262.2 268.6,261.3 271.9,259.9 275.2,259.0 278.5,257.5 281.8,256.4 285.0,254.8 288.3,253.4 291.6,252.4 294.9,251.7 298.2,250.7 301.5,249.6 304.8,249.5 308.1,249.5 311.4,249.5 314.7,249.6 318.0,250.6 321.3,251.9 324.6,252.8 327.9,253.7 331.2,255.3 334.5,256.6 337.7,258.0 341.0,259.1 344.3,259.8 347.6,261.0 350.9,262.2 354.2,262.9 357.5,263.2 360.8,262.7 364.1,262.8 367.4,262.8 370.7,262.0 374.0,260.9 377.3,260.1 380.6,259.2 383.9,257.5 387.1,256.3 390.4,254.9 393.7,253.5 397.0,252.2 400.3,251.3 403.6,250.9 406.9,249.7 410.2,249.7 413.5,249.7 416.8,249.5 420.1,249.3 423.4,250.6 426.7,251.7 430.0,252.8 433.3,253.7 436.6,254.7 439.9,256.4 443.1,257.5 446.4,259.0 449.7,260.2 453.0,261.0 456.3,262.2 459.6,263.2 462.9,263.5 466.2,263.3 469.5,263.1 472.8,263.2 476.1,262.2 479.4,261.1 482.7,260.4 486.0,259.1 489.3,257.5 492.6,256.1 495.8,254.8 499.1,253.3 502.4,252.2 505.7,251.6 509.0,250.9 512.3,249.7 515.6,249.7 518.9,249.5 522.2,249.6 525.5,249.5 528.8,250.6 532.1,251.4 535.4,252.4 538.7,253.7 542.0,254.8 545.2,256.2 548.5,257.6 551.8,259.0 555.1,259.8 558.4,260.8 561.7,261.7 565.0,262.9 568.3,263.0 571.6,263.3 574.9,263.2 578.2,263.2 581.5,262.2 584.8,261.2 588.1,259.9 591.4,259.0 594.7,257.7 598.0,256.2 601.2,254.8 604.5,253.3 607.8,252.4 611.1,251.4 614.4,250.3 617.7,249.5 621.0,249.4 624.3,249.4 627.6,249.6 630.9,249.6 634.1,250.4 637.3,251.4 640.5,252.3" fill="none" stroke="#d88030" stroke-width="1.15"/>
<polyline points="34.5,275.6 38.0,276.9 41.3,276.8 44.6,276.8 47.9,276.7 51.2,276.6 54.5,275.8 57.8,274.6 61.1,273.7 64.4,272.8 67.7,271.5 70.9,269.9 74.2,268.5 77.5,267.2 80.8,266.4 84.1,265.4 87.4,264.2 90.7,263.1 94.0,263.2 97.3,263.1 100.6,263.3 103.9,263.5 107.2,264.2 110.5,265.3 113.8,266.2 117.1,267.1 120.4,268.3 123.7,270.3 126.9,271.4 130.2,272.9 133.5,274.1 136.8,275.0 140.1,275.9 143.4,276.6 146.7,276.4 150.0,276.5 153.3,276.8 156.6,276.5 159.9,275.4 163.2,274.5 166.5,273.9 169.8,273.0 173.1,271.5 176.3,270.3 179.6,268.8 182.9,267.2 186.2,266.2 189.5,265.4 192.8,264.1 196.1,263.0 199.4,263.1 202.7,263.2 206.0,263.1 209.3,263.2 212.6,264.1 215.9,265.2 219.2,266.1 222.5,267.2 225.8,268.9 229.1,270.1 232.3,271.5 235.6,272.9 238.9,273.6 242.2,274.7 245.5,275.6 248.8,276.6 252.1,276.6 255.4,276.6 258.7,276.8 262.0,276.6 265.3,276.0 268.6,274.8 271.9,273.9 275.2,273.0 278.5,271.7 281.8,270.5 285.0,268.7 288.3,267.3 291.6,266.3 294.9,265.4 298.2,263.9 301.5,263.1 304.8,263.0 308.1,263.4 311.4,263.3 314.7,263.2 318.0,264.2 321.3,264.9 324.6,266.4 327.9,267.1 331.2,268.7 334.5,270.2 337.7,271.7 341.0,272.9 344.3,274.1 347.6,274.8 350.9,275.6 354.2,276.8 357.5,276.7 360.8,276.9 364.1,276.9 367.4,276.9 370.7,275.8 374.0,274.8 377.3,274.0 380.6,273.0 383.9,271.6 387.1,270.0 390.4,268.9 393.7,267.2 397.0,266.3 400.3,265.0 403.6,264.3 406.9,263.4 410.2,263.5 413.5,263.2 416.8,263.5 420.1,263.4 423.4,264.1 426.7,265.2 430.0,266.5 433.3,267.3 436.6,268.7 439.9,270.2 443.1,271.2 446.4,272.8 449.7,273.8 453.0,274.9 456.3,275.7 459.6,276.9 462.9,277.0 466.2,276.9 469.5,277.2 472.8,276.9 476.1,275.9 479.4,274.9 482.7,273.7 486.0,273.0 489.3,271.3 492.6,270.2 495.8,268.3 499.1,267.0 502.4,265.9 505.7,265.0 509.0,264.3 512.3,263.4 515.6,263.5 518.9,263.3 522.2,263.3 525.5,263.0 528.8,263.8 532.1,264.9 535.4,266.4 538.7,267.3 542.0,268.6 545.2,270.2 548.5,271.4 551.8,272.8 555.1,273.6 558.4,274.7 561.7,275.5 565.0,276.8 568.3,277.1 571.6,276.9 574.9,276.8 578.2,277.0 581.5,275.9 584.8,274.8 588.1,273.6 591.4,272.8 594.7,271.7 598.0,270.0 601.2,268.9 604.5,267.2 607.8,266.2 611.1,265.3 614.4,264.2 617.7,263.4 621.0,263.1 624.3,263.7 627.6,263.6 630.9,263.4 634.1,264.2 637.3,265.5 640.5,266.2" fill="none" stroke="#b070b8" stroke-width="1.15"/>
<line x1="34.5" y1="285.5" x2="640.5" y2="285.5" stroke="#4050a8" stroke-width="1" opacity="0.85"/>
<rect x="34.5" y="285" width="36.5" height="3.8" fill="#4050a8"/>
<rect x="123.0" y="285" width="53.5" height="3.8" fill="#4050a8"/>
<rect x="228.5" y="285" width="53.5" height="3.8" fill="#4050a8"/>
<rect x="334.0" y="285" width="53.5" height="3.8" fill="#4050a8"/>
<rect x="439.5" y="285" width="53.5" height="3.8" fill="#4050a8"/>
<rect x="545.0" y="285" width="53.5" height="3.8" fill="#4050a8"/>
<line x1="34.5" y1="292.3" x2="640.5" y2="292.3" stroke="#8060b8" stroke-width="1" opacity="0.85"/>
<rect x="34.5" y="291.8" width="36.5" height="3.8" fill="#8060b8"/>
<rect x="123.0" y="291.8" width="53.5" height="3.8" fill="#8060b8"/>
<rect x="228.5" y="291.8" width="53.5" height="3.8" fill="#8060b8"/>
<rect x="334.0" y="291.8" width="53.5" height="3.8" fill="#8060b8"/>
<rect x="439.5" y="291.8" width="53.5" height="3.8" fill="#8060b8"/>
<rect x="545.0" y="291.8" width="53.5" height="3.8" fill="#8060b8"/>
<line x1="34.5" y1="298.1" x2="640.5" y2="298.1" stroke="#4898e0" stroke-width="1" opacity="0.85"/>
<rect x="34.5" y="297.6" width="36.5" height="3.8" fill="#4898e0"/>
<rect x="123.0" y="297.6" width="53.5" height="3.8" fill="#4898e0"/>
<rect x="228.5" y="297.6" width="53.5" height="3.8" fill="#4898e0"/>
<rect x="334.0" y="297.6" width="53.5" height="3.8" fill="#4898e0"/>
<rect x="439.5" y="297.6" width="53.5" height="3.8" fill="#4898e0"/>
<rect x="545.0" y="297.6" width="53.5" height="3.8" fill="#4898e0"/>
<line x1="34.5" y1="304.5" x2="640.5" y2="304.5" stroke="#e03090" stroke-width="1" opacity="0.85"/>
<rect x="34.5" y="304" width="36.5" height="3.8" fill="#e03090"/>
<rect x="123.0" y="304" width="53.5" height="3.8" fill="#e03090"/>
<rect x="228.5" y="304" width="53.5" height="3.8" fill="#e03090"/>
<rect x="334.0" y="304" width="53.5" height="3.8" fill="#e03090"/>
<rect x="439.5" y="304" width="53.5" height="3.8" fill="#e03090"/>
<rect x="545.0" y="304" width="53.5" height="3.8" fill="#e03090"/>
<line x1="34.5" y1="352.5" x2="640.5" y2="352.5" stroke="#40b0d8" stroke-width="1" opacity="0.85"/>
<rect x="34.5" y="352" width="36.5" height="3.8" fill="#40b0d8"/>
<rect x="123.0" y="352" width="53.5" height="3.8" fill="#40b0d8"/>
<rect x="228.5" y="352" width="53.5" height="3.8" fill="#40b0d8"/>
<rect x="334.0" y="352" width="53.5" height="3.8" fill="#40b0d8"/>
<rect x="439.5" y="352" width="53.5" height="3.8" fill="#40b0d8"/>
<rect x="545.0" y="352" width="53.5" height="3.8" fill="#40b0d8"/>
<line x1="34.5" y1="358.8" x2="640.5" y2="358.8" stroke="#20a048" stroke-width="1" opacity="0.85"/>
<rect x="34.5" y="358.3" width="36.5" height="3.8" fill="#20a048"/>
<rect x="123.0" y="358.3" width="53.5" height="3.8" fill="#20a048"/>
<rect x="228.5" y="358.3" width="53.5" height="3.8" fill="#20a048"/>
<rect x="334.0" y="358.3" width="53.5" height="3.8" fill="#20a048"/>
<rect x="439.5" y="358.3" width="53.5" height="3.8" fill="#20a048"/>
<rect x="545.0" y="358.3" width="53.5" height="3.8" fill="#20a048"/>
<line x1="34.5" y1="365.0" x2="640.5" y2="365.0" stroke="#e01828" stroke-width="1" opacity="0.85"/>
<rect x="34.5" y="364.5" width="36.5" height="3.8" fill="#e01828"/>
<rect x="123.0" y="364.5" width="53.5" height="3.8" fill="#e01828"/>
<rect x="228.5" y="364.5" width="53.5" height="3.8" fill="#e01828"/>
<rect x="334.0" y="364.5" width="53.5" height="3.8" fill="#e01828"/>
<rect x="439.5" y="364.5" width="53.5" height="3.8" fill="#e01828"/>
<rect x="545.0" y="364.5" width="53.5" height="3.8" fill="#e01828"/>
<line x1="34.5" y1="371.3" x2="640.5" y2="371.3" stroke="#8a8a8a" stroke-width="1" opacity="0.85"/>
<rect x="34.5" y="370.8" width="36.5" height="3.8" fill="#8a8a8a"/>
<rect x="123.0" y="370.8" width="53.5" height="3.8" fill="#8a8a8a"/>
<rect x="228.5" y="370.8" width="53.5" height="3.8" fill="#8a8a8a"/>
<rect x="334.0" y="370.8" width="53.5" height="3.8" fill="#8a8a8a"/>
<rect x="439.5" y="370.8" width="53.5" height="3.8" fill="#8a8a8a"/>
<rect x="545.0" y="370.8" width="53.5" height="3.8" fill="#8a8a8a"/>
<line x1="34.5" y1="419.2" x2="640.5" y2="419.2" stroke="#20a0a0" stroke-width="1" opacity="0.85"/>
<rect x="34.5" y="418.7" width="36.5" height="3.8" fill="#20a0a0"/>
<rect x="123.0" y="418.7" width="53.5" height="3.8" fill="#20a0a0"/>
<rect x="228.5" y="418.7" width="53.5" height="3.8" fill="#20a0a0"/>
<rect x="334.0" y="418.7" width="53.5" height="3.8" fill="#20a0a0"/>
<rect x="439.5" y="418.7" width="53.5" height="3.8" fill="#20a0a0"/>
<rect x="545.0" y="418.7" width="53.5" height="3.8" fill="#20a0a0"/>
<line x1="34.5" y1="425.7" x2="640.5" y2="425.7" stroke="#e0a030" stroke-width="1" opacity="0.85"/>
<rect x="34.5" y="425.2" width="36.5" height="3.8" fill="#e0a030"/>
<rect x="123.0" y="425.2" width="53.5" height="3.8" fill="#e0a030"/>
<rect x="228.5" y="425.2" width="53.5" height="3.8" fill="#e0a030"/>
<rect x="334.0" y="425.2" width="53.5" height="3.8" fill="#e0a030"/>
<rect x="439.5" y="425.2" width="53.5" height="3.8" fill="#e0a030"/>
<rect x="545.0" y="425.2" width="53.5" height="3.8" fill="#e0a030"/>
<line x1="34.5" y1="432.0" x2="640.5" y2="432.0" stroke="#8050b0" stroke-width="1" opacity="0.85"/>
<rect x="34.5" y="431.5" width="36.5" height="3.8" fill="#8050b0"/>
<rect x="123.0" y="431.5" width="53.5" height="3.8" fill="#8050b0"/>
<rect x="228.5" y="431.5" width="53.5" height="3.8" fill="#8050b0"/>
<rect x="334.0" y="431.5" width="53.5" height="3.8" fill="#8050b0"/>
<rect x="439.5" y="431.5" width="53.5" height="3.8" fill="#8050b0"/>
<rect x="545.0" y="431.5" width="53.5" height="3.8" fill="#8050b0"/>
<line x1="34.5" y1="438.2" x2="640.5" y2="438.2" stroke="#2090e0" stroke-width="1" opacity="0.85"/>
<rect x="34.5" y="437.7" width="36.5" height="3.8" fill="#2090e0"/>
<rect x="123.0" y="437.7" width="53.5" height="3.8" fill="#2090e0"/>
<rect x="228.5" y="437.7" width="53.5" height="3.8" fill="#2090e0"/>
<rect x="334.0" y="437.7" width="53.5" height="3.8" fill="#2090e0"/>
<rect x="439.5" y="437.7" width="53.5" height="3.8" fill="#2090e0"/>
<rect x="545.0" y="437.7" width="53.5" height="3.8" fill="#2090e0"/>
<line x1="34.5" y1="486.7" x2="640.5" y2="486.7" stroke="#e020a0" stroke-width="1" opacity="0.85"/>
<rect x="34.5" y="486.2" width="36.5" height="3.8" fill="#e020a0"/>
<rect x="123.0" y="486.2" width="53.5" height="3.8" fill="#e020a0"/>
<rect x="228.5" y="486.2" width="53.5" height="3.8" fill="#e020a0"/>
<rect x="334.0" y="486.2" width="53.5" height="3.8" fill="#e020a0"/>
<rect x="439.5" y="486.2" width="53.5" height="3.8" fill="#e020a0"/>
<rect x="545.0" y="486.2" width="53.5" height="3.8" fill="#e020a0"/>
<line x1="34.5" y1="492.7" x2="640.5" y2="492.7" stroke="#a0a040" stroke-width="1" opacity="0.85"/>
<rect x="34.5" y="492.2" width="36.5" height="3.8" fill="#a0a040"/>
<rect x="123.0" y="492.2" width="53.5" height="3.8" fill="#a0a040"/>
<rect x="228.5" y="492.2" width="53.5" height="3.8" fill="#a0a040"/>
<rect x="334.0" y="492.2" width="53.5" height="3.8" fill="#a0a040"/>
<rect x="439.5" y="492.2" width="53.5" height="3.8" fill="#a0a040"/>
<rect x="545.0" y="492.2" width="53.5" height="3.8" fill="#a0a040"/>
<line x1="34.5" y1="498.9" x2="640.5" y2="498.9" stroke="#30c080" stroke-width="1" opacity="0.85"/>
<rect x="34.5" y="498.4" width="36.5" height="3.8" fill="#30c080"/>
<rect x="123.0" y="498.4" width="53.5" height="3.8" fill="#30c080"/>
<rect x="228.5" y="498.4" width="53.5" height="3.8" fill="#30c080"/>
<rect x="334.0" y="498.4" width="53.5" height="3.8" fill="#30c080"/>
<rect x="439.5" y="498.4" width="53.5" height="3.8" fill="#30c080"/>
<rect x="545.0" y="498.4" width="53.5" height="3.8" fill="#30c080"/>
<line x1="34.5" y1="505.0" x2="640.5" y2="505.0" stroke="#505050" stroke-width="1" opacity="0.85"/>
<rect x="34.5" y="504.5" width="36.5" height="3.8" fill="#505050"/>
<rect x="123.0" y="504.5" width="53.5" height="3.8" fill="#505050"/>
<rect x="228.5" y="504.5" width="53.5" height="3.8" fill="#505050"/>
<rect x="334.0" y="504.5" width="53.5" height="3.8" fill="#505050"/>
<rect x="439.5" y="504.5" width="53.5" height="3.8" fill="#505050"/>
<rect x="545.0" y="504.5" width="53.5" height="3.8" fill="#505050"/>
<polyline points="34.5,332.5 35.5,332.5 36.5,332.5 37.5,332.5 38.5,332.5 39.5,332.5 40.5,332.5 41.5,332.5 42.5,332.5 43.5,331.5 44.5,331.5 45.5,331.5 46.5,331.5 47.5,331.5 48.5,331.5 49.5,331.5 50.5,331.5 51.5,331.5 52.5,331.5 53.5,331.5 54.5,331.5 55.5,331.5 56.5,331.5 57.5,331.5 58.5,330.5 59.5,330.5 60.5,330.5 61.5,330.5 62.5,330.5 63.5,330.5 64.5,330.5 65.5,330.5 66.5,330.5 67.5,330.5 68.5,330.5 69.5,330.5 70.5,330.5 71.5,330.5 72.5,330.5 73.5,329.5 74.5,329.5 75.5,329.5 76.5,329.5 77.5,329.5 78.5,329.5 79.5,329.5 80.5,329.5 81.5,329.5 82.5,329.5 83.5,329.5 84.5,329.5 85.5,329.5 86.5,329.5 87.5,329.5 88.5,328.5 89.5,328.5 90.5,328.5 91.5,328.5 92.5,328.5 93.5,328.5 94.5,328.5 95.5,328.5 96.5,328.5 97.5,328.5 98.5,328.5 99.5,328.5 100.5,328.5 101.5,328.5 102.5,328.5 103.5,327.5 104.5,327.5 105.5,327.5 106.5,327.5 107.5,327.5 108.5,327.5 109.5,327.5 110.5,327.5 111.5,327.5 112.5,327.5 113.5,327.5 114.5,327.5 115.5,327.5 116.5,327.5 117.5,327.5 118.5,326.5 119.5,326.5 120.5,326.5 121.5,326.5 122.5,326.5 123.5,326.5 124.5,326.5 125.5,326.5 126.5,326.5 127.5,326.5 128.5,326.5 129.5,326.5 130.5,326.5 131.5,326.5 132.5,326.5 133.5,325.5 134.5,325.5 135.5,325.5 136.5,325.5 137.5,325.5 138.5,325.5 139.5,325.5 140.5,325.5 141.5,325.5 142.5,325.5 143.5,325.5 144.5,325.5 145.5,325.5 146.5,325.5 147.5,325.5 148.5,325.5 149.5,325.5 150.5,325.5 151.5,325.5 152.5,325.5 153.5,325.5 154.5,325.5 155.5,325.5 156.5,325.5 157.5,325.5 158.5,325.5 159.5,325.5 160.5,325.5 161.5,325.5 162.5,325.5 163.5,325.5 164.5,325.5 165.5,325.5 166.5,325.5 167.5,325.5 168.5,325.5 169.5,325.5 170.5,325.5 171.5,325.5 172.5,325.5 173.5,325.5 173.5,334.5 174.5,334.5 175.5,334.5 176.5,334.5 177.5,334.5 178.5,334.5 179.5,334.5 180.5,334.5 181.5,334.5 182.5,334.5 183.5,334.5 184.5,334.5 185.5,334.5 186.5,334.5 187.5,334.5 188.5,333.5 189.5,333.5 190.5,333.5 191.5,333.5 192.5,333.5 193.5,333.5 194.5,333.5 195.5,333.5 196.5,333.5 197.5,333.5 198.5,333.5 199.5,333.5 200.5,333.5 201.5,333.5 202.5,333.5 203.5,332.5 204.5,332.5 205.5,332.5 206.5,332.5 207.5,332.5 208.5,332.5 209.5,332.5 210.5,332.5 211.5,332.5 212.5,332.5 213.5,332.5 214.5,332.5 215.5,332.5 216.5,332.5 217.5,332.5 218.5,331.5 219.5,331.5 220.5,331.5 221.5,331.5 222.5,331.5 223.5,331.5 224.5,331.5 225.5,331.5 226.5,331.5 227.5,331.5 228.5,331.5 229.5,331.5 230.5,331.5 231.5,331.5 232.5,331.5 233.5,330.5 234.5,330.5 235.5,330.5 236.5,330.5 237.5,330.5 238.5,330.5 239.5,330.5 240.5,330.5 241.5,330.5 242.5,330.5 243.5,330.5 244.5,330.5 245.5,330.5 246.5,330.5 247.5,330.5 248.5,329.5 249.5,329.5 250.5,329.5 251.5,329.5 252.5,329.5 253.5,329.5 254.5,329.5 255.5,329.5 256.5,329.5 257.5,329.5 258.5,329.5 259.5,329.5 260.5,329.5 261.5,329.5 262.5,329.5 263.5,328.5 264.5,328.5 265.5,328.5 266.5,328.5 267.5,328.5 268.5,328.5 269.5,328.5 270.5,328.5 271.5,328.5 272.5,328.5 273.5,328.5 274.5,328.5 275.5,328.5 276.5,328.5 277.5,328.5 278.5,327.5 279.5,327.5 280.5,327.5 281.5,327.5 282.5,327.5 283.5,327.5 284.5,327.5 285.5,327.5 286.5,327.5 287.5,327.5 288.5,327.5 289.5,327.5 290.5,327.5 291.5,327.5 292.5,327.5 293.5,326.5 294.5,326.5 295.5,326.5 296.5,326.5 297.5,326.5 298.5,326.5 299.5,326.5 300.5,326.5 301.5,326.5 302.5,326.5 303.5,326.5 304.5,326.5 305.5,326.5 306.5,326.5 307.5,326.5 308.5,325.5 309.5,325.5 310.5,325.5 311.5,325.5 312.5,325.5 313.5,325.5 314.5,325.5 315.5,325.5 316.5,325.5 317.5,325.5 318.5,325.5 319.5,325.5 320.5,325.5 321.5,325.5 322.5,325.5 323.5,325.5 324.5,325.5 325.5,325.5 326.5,325.5 327.5,325.5 328.5,325.5 329.5,325.5 330.5,325.5 331.5,325.5 332.5,325.5 333.5,325.5 334.5,325.5 335.5,325.5 336.5,325.5 337.5,325.5 338.5,325.5 339.5,325.5 340.5,325.5 341.5,325.5 342.5,325.5 343.5,325.5 344.5,325.5 345.5,325.5 346.5,325.5 347.5,325.5 348.5,325.5 348.5,334.5 349.5,334.5 350.5,334.5 351.5,334.5 352.5,334.5 353.5,334.5 354.5,334.5 355.5,334.5 356.5,334.5 357.5,334.5 358.5,334.5 359.5,334.5 360.5,334.5 361.5,334.5 362.5,334.5 363.5,333.5 364.5,333.5 365.5,333.5 366.5,333.5 367.5,333.5 368.5,333.5 369.5,333.5 370.5,333.5 371.5,333.5 372.5,333.5 373.5,333.5 374.5,333.5 375.5,333.5 376.5,333.5 377.5,333.5 378.5,332.5 379.5,332.5 380.5,332.5 381.5,332.5 382.5,332.5 383.5,332.5 384.5,332.5 385.5,332.5 386.5,332.5 387.5,332.5 388.5,332.5 389.5,332.5 390.5,332.5 391.5,332.5 392.5,332.5 393.5,331.5 394.5,331.5 395.5,331.5 396.5,331.5 397.5,331.5 398.5,331.5 399.5,331.5 400.5,331.5 401.5,331.5 402.5,331.5 403.5,331.5 404.5,331.5 405.5,331.5 406.5,331.5 407.5,331.5 408.5,330.5 409.5,330.5 410.5,330.5 411.5,330.5 412.5,330.5 413.5,330.5 414.5,330.5 415.5,330.5 416.5,330.5 417.5,330.5 418.5,330.5 419.5,330.5 420.5,330.5 421.5,330.5 422.5,330.5 423.5,329.5 424.5,329.5 425.5,329.5 426.5,329.5 427.5,329.5 428.5,329.5 429.5,329.5 430.5,329.5 431.5,329.5 432.5,329.5 433.5,329.5 434.5,329.5 435.5,329.5 436.5,329.5 437.5,329.5 438.5,328.5 439.5,328.5 440.5,328.5 441.5,328.5 442.5,328.5 443.5,328.5 444.5,328.5 445.5,328.5 446.5,328.5 447.5,328.5 448.5,328.5 449.5,328.5 450.5,328.5 451.5,328.5 452.5,328.5 453.5,327.5 454.5,327.5 455.5,327.5 456.5,327.5 457.5,327.5 458.5,327.5 459.5,327.5 460.5,327.5 461.5,327.5 462.5,327.5 463.5,327.5 464.5,327.5 465.5,327.5 466.5,327.5 467.5,327.5 468.5,326.5 469.5,326.5 470.5,326.5 471.5,326.5 472.5,326.5 473.5,326.5 474.5,326.5 475.5,326.5 476.5,326.5 477.5,326.5 478.5,326.5 479.5,326.5 480.5,326.5 481.5,326.5 482.5,326.5 483.5,325.5 484.5,325.5 485.5,325.5 486.5,325.5 487.5,325.5 488.5,325.5 489.5,325.5 490.5,325.5 491.5,325.5 492.5,325.5 493.5,325.5 494.5,325.5 495.5,325.5 496.5,325.5 497.5,325.5 498.5,325.5 499.5,325.5 500.5,325.5 501.5,325.5 502.5,325.5 503.5,325.5 504.5,325.5 505.5,325.5 506.5,325.5 507.5,325.5 508.5,325.5 509.5,325.5 510.5,325.5 511.5,325.5 512.5,325.5 513.5,325.5 514.5,325.5 515.5,325.5 516.5,325.5 517.5,325.5 518.5,325.5 519.5,325.5 520.5,325.5 521.5,325.5 522.5,325.5 523.5,325.5 524.5,325.5 524.5,334.5 525.5,334.5 526.5,334.5 527.5,334.5 528.5,334.5 529.5,334.5 530.5,334.5 531.5,334.5 532.5,334.5 533.5,334.5 534.5,334.5 535.5,334.5 536.5,334.5 537.5,334.5 538.5,334.5 539.5,333.5 540.5,333.5 541.5,333.5 542.5,333.5 543.5,333.5 544.5,333.5 545.5,333.5 546.5,333.5 547.5,333.5 548.5,333.5 549.5,333.5 550.5,333.5 551.5,333.5 552.5,333.5 553.5,333.5 554.5,332.5 555.5,332.5 556.5,332.5 557.5,332.5 558.5,332.5 559.5,332.5 560.5,332.5 561.5,332.5 562.5,332.5 563.5,332.5 564.5,332.5 565.5,332.5 566.5,332.5 567.5,332.5 568.5,332.5 569.5,331.5 570.5,331.5 571.5,331.5 572.5,331.5 573.5,331.5 574.5,331.5 575.5,331.5 576.5,331.5 577.5,331.5 578.5,331.5 579.5,331.5 580.5,331.5 581.5,331.5 582.5,331.5 583.5,331.5 584.5,330.5 585.5,330.5 586.5,330.5 587.5,330.5 588.5,330.5 589.5,330.5 590.5,330.5 591.5,330.5 592.5,330.5 593.5,330.5 594.5,330.5 595.5,330.5 596.5,330.5 597.5,330.5 598.5,330.5 599.5,329.5 600.5,329.5 601.5,329.5 602.5,329.5 603.5,329.5 604.5,329.5 605.5,329.5 606.5,329.5 607.5,329.5 608.5,329.5 609.5,329.5 610.5,329.5 611.5,329.5 612.5,329.5 613.5,329.5 614.5,328.5 615.5,328.5 616.5,328.5 617.5,328.5 618.5,328.5 619.5,328.5 620.5,328.5 621.5,328.5 622.5,328.5 623.5,328.5 624.5,328.5 625.5,328.5 626.5,328.5 627.5,328.5 628.5,328.5 629.5,327.5 630.5,327.5 631.5,327.5 632.5,327.5 633.5,327.5 634.5,327.5 635.5,327.5 636.5,327.5 637.5,327.5 638.5,327.5 639.5,327.5 640.5,327.5" fill="none" stroke="#c84a90" stroke-width="1.0"/>
<polyline points="34.5,386.5 35.5,386.5 36.5,386.5 37.5,386.5 38.5,386.5 39.5,386.5 40.5,386.5 41.5,386.5 42.5,386.5 43.5,386.5 44.5,386.5 45.5,386.5 46.5,386.5 47.5,385.5 48.5,385.5 49.5,385.5 50.5,385.5 51.5,385.5 52.5,385.5 53.5,385.5 54.5,385.5 55.5,385.5 56.5,385.5 57.5,385.5 58.5,385.5 59.5,385.5 60.5,385.5 61.5,385.5 62.5,385.5 63.5,385.5 64.5,385.5 65.5,385.5 66.5,385.5 67.5,385.5 68.5,384.5 69.5,384.5 70.5,384.5 71.5,384.5 72.5,384.5 73.5,384.5 74.5,384.5 75.5,384.5 76.5,384.5 77.5,384.5 78.5,384.5 79.5,384.5 80.5,384.5 81.5,384.5 82.5,384.5 83.5,384.5 84.5,384.5 85.5,384.5 86.5,384.5 87.5,384.5 88.5,384.5 89.5,384.5 90.5,383.5 91.5,383.5 92.5,383.5 93.5,383.5 94.5,383.5 95.5,383.5 96.5,383.5 97.5,383.5 98.5,383.5 99.5,383.5 100.5,383.5 101.5,383.5 102.5,383.5 103.5,383.5 104.5,383.5 105.5,383.5 106.5,383.5 107.5,383.5 108.5,383.5 109.5,383.5 110.5,383.5 111.5,382.5 112.5,382.5 113.5,382.5 114.5,382.5 115.5,382.5 116.5,382.5 117.5,382.5 118.5,382.5 119.5,382.5 120.5,382.5 121.5,382.5 122.5,382.5 123.5,382.5 124.5,382.5 125.5,382.5 126.5,382.5 127.5,382.5 128.5,382.5 129.5,382.5 130.5,382.5 131.5,382.5 132.5,382.5 133.5,381.5 134.5,381.5 135.5,381.5 136.5,381.5 137.5,381.5 138.5,381.5 139.5,381.5 140.5,381.5 141.5,381.5 142.5,381.5 143.5,381.5 144.5,381.5 145.5,381.5 146.5,381.5 147.5,381.5 148.5,381.5 149.5,381.5 150.5,381.5 151.5,381.5 152.5,381.5 153.5,381.5 154.5,381.5 155.5,381.5 156.5,381.5 157.5,381.5 158.5,381.5 159.5,381.5 160.5,381.5 161.5,381.5 162.5,381.5 163.5,381.5 164.5,381.5 165.5,381.5 166.5,381.5 167.5,381.5 168.5,381.5 169.5,381.5 170.5,381.5 171.5,381.5 172.5,381.5 173.5,381.5 173.5,388.5 174.5,388.5 175.5,388.5 176.5,388.5 177.5,388.5 178.5,388.5 179.5,387.5 180.5,387.5 181.5,387.5 182.5,387.5 183.5,387.5 184.5,387.5 185.5,387.5 186.5,387.5 187.5,387.5 188.5,387.5 189.5,387.5 190.5,387.5 191.5,387.5 192.5,387.5 193.5,387.5 194.5,387.5 195.5,387.5 196.5,387.5 197.5,387.5 198.5,387.5 199.5,387.5 200.5,387.5 201.5,386.5 202.5,386.5 203.5,386.5 204.5,386.5 205.5,386.5 206.5,386.5 207.5,386.5 208.5,386.5 209.5,386.5 210.5,386.5 211.5,386.5 212.5,386.5 213.5,386.5 214.5,386.5 215.5,386.5 216.5,386.5 217.5,386.5 218.5,386.5 219.5,386.5 220.5,386.5 221.5,386.5 222.5,385.5 223.5,385.5 224.5,385.5 225.5,385.5 226.5,385.5 227.5,385.5 228.5,385.5 229.5,385.5 230.5,385.5 231.5,385.5 232.5,385.5 233.5,385.5 234.5,385.5 235.5,385.5 236.5,385.5 237.5,385.5 238.5,385.5 239.5,385.5 240.5,385.5 241.5,385.5 242.5,385.5 243.5,385.5 244.5,384.5 245.5,384.5 246.5,384.5 247.5,384.5 248.5,384.5 249.5,384.5 250.5,384.5 251.5,384.5 252.5,384.5 253.5,384.5 254.5,384.5 255.5,384.5 256.5,384.5 257.5,384.5 258.5,384.5 259.5,384.5 260.5,384.5 261.5,384.5 262.5,384.5 263.5,384.5 264.5,384.5 265.5,383.5 266.5,383.5 267.5,383.5 268.5,383.5 269.5,383.5 270.5,383.5 271.5,383.5 272.5,383.5 273.5,383.5 274.5,383.5 275.5,383.5 276.5,383.5 277.5,383.5 278.5,383.5 279.5,383.5 280.5,383.5 281.5,383.5 282.5,383.5 283.5,383.5 284.5,383.5 285.5,383.5 286.5,383.5 287.5,382.5 288.5,382.5 289.5,382.5 290.5,382.5 291.5,382.5 292.5,382.5 293.5,382.5 294.5,382.5 295.5,382.5 296.5,382.5 297.5,382.5 298.5,382.5 299.5,382.5 300.5,382.5 301.5,382.5 302.5,382.5 303.5,382.5 304.5,382.5 305.5,382.5 306.5,382.5 307.5,382.5 308.5,381.5 309.5,381.5 310.5,381.5 311.5,381.5 312.5,381.5 313.5,381.5 314.5,381.5 315.5,381.5 316.5,381.5 317.5,381.5 318.5,381.5 319.5,381.5 320.5,381.5 321.5,381.5 322.5,381.5 323.5,381.5 324.5,381.5 325.5,381.5 326.5,381.5 327.5,381.5 328.5,381.5 329.5,381.5 330.5,381.5 331.5,381.5 332.5,381.5 333.5,381.5 334.5,381.5 335.5,381.5 336.5,381.5 337.5,381.5 338.5,381.5 339.5,381.5 340.5,381.5 341.5,381.5 342.5,381.5 343.5,381.5 344.5,381.5 345.5,381.5 346.5,381.5 347.5,381.5 348.5,381.5 348.5,388.5 349.5,388.5 350.5,388.5 351.5,388.5 352.5,388.5 353.5,388.5 354.5,388.5 355.5,387.5 356.5,387.5 357.5,387.5 358.5,387.5 359.5,387.5 360.5,387.5 361.5,387.5 362.5,387.5 363.5,387.5 364.5,387.5 365.5,387.5 366.5,387.5 367.5,387.5 368.5,387.5 369.5,387.5 370.5,387.5 371.5,387.5 372.5,387.5 373.5,387.5 374.5,387.5 375.5,387.5 376.5,386.5 377.5,386.5 378.5,386.5 379.5,386.5 380.5,386.5 381.5,386.5 382.5,386.5 383.5,386.5 384.5,386.5 385.5,386.5 386.5,386.5 387.5,386.5 388.5,386.5 389.5,386.5 390.5,386.5 391.5,386.5 392.5,386.5 393.5,386.5 394.5,386.5 395.5,386.5 396.5,386.5 397.5,386.5 398.5,385.5 399.5,385.5 400.5,385.5 401.5,385.5 402.5,385.5 403.5,385.5 404.5,385.5 405.5,385.5 406.5,385.5 407.5,385.5 408.5,385.5 409.5,385.5 410.5,385.5 411.5,385.5 412.5,385.5 413.5,385.5 414.5,385.5 415.5,385.5 416.5,385.5 417.5,385.5 418.5,385.5 419.5,384.5 420.5,384.5 421.5,384.5 422.5,384.5 423.5,384.5 424.5,384.5 425.5,384.5 426.5,384.5 427.5,384.5 428.5,384.5 429.5,384.5 430.5,384.5 431.5,384.5 432.5,384.5 433.5,384.5 434.5,384.5 435.5,384.5 436.5,384.5 437.5,384.5 438.5,384.5 439.5,384.5 440.5,384.5 441.5,383.5 442.5,383.5 443.5,383.5 444.5,383.5 445.5,383.5 446.5,383.5 447.5,383.5 448.5,383.5 449.5,383.5 450.5,383.5 451.5,383.5 452.5,383.5 453.5,383.5 454.5,383.5 455.5,383.5 456.5,383.5 457.5,383.5 458.5,383.5 459.5,383.5 460.5,383.5 461.5,383.5 462.5,382.5 463.5,382.5 464.5,382.5 465.5,382.5 466.5,382.5 467.5,382.5 468.5,382.5 469.5,382.5 470.5,382.5 471.5,382.5 472.5,382.5 473.5,382.5 474.5,382.5 475.5,382.5 476.5,382.5 477.5,382.5 478.5,382.5 479.5,382.5 480.5,382.5 481.5,382.5 482.5,382.5 483.5,381.5 484.5,381.5 485.5,381.5 486.5,381.5 487.5,381.5 488.5,381.5 489.5,381.5 490.5,381.5 491.5,381.5 492.5,381.5 493.5,381.5 494.5,381.5 495.5,381.5 496.5,381.5 497.5,381.5 498.5,381.5 499.5,381.5 500.5,381.5 501.5,381.5 502.5,381.5 503.5,381.5 504.5,381.5 505.5,381.5 506.5,381.5 507.5,381.5 508.5,381.5 509.5,381.5 510.5,381.5 511.5,381.5 512.5,381.5 513.5,381.5 514.5,381.5 515.5,381.5 516.5,381.5 517.5,381.5 518.5,381.5 519.5,381.5 520.5,381.5 521.5,381.5 522.5,381.5 523.5,381.5 524.5,381.5 524.5,388.5 525.5,388.5 526.5,388.5 527.5,388.5 528.5,388.5 529.5,388.5 530.5,387.5 531.5,387.5 532.5,387.5 533.5,387.5 534.5,387.5 535.5,387.5 536.5,387.5 537.5,387.5 538.5,387.5 539.5,387.5 540.5,387.5 541.5,387.5 542.5,387.5 543.5,387.5 544.5,387.5 545.5,387.5 546.5,387.5 547.5,387.5 548.5,387.5 549.5,387.5 550.5,387.5 551.5,387.5 552.5,386.5 553.5,386.5 554.5,386.5 555.5,386.5 556.5,386.5 557.5,386.5 558.5,386.5 559.5,386.5 560.5,386.5 561.5,386.5 562.5,386.5 563.5,386.5 564.5,386.5 565.5,386.5 566.5,386.5 567.5,386.5 568.5,386.5 569.5,386.5 570.5,386.5 571.5,386.5 572.5,386.5 573.5,385.5 574.5,385.5 575.5,385.5 576.5,385.5 577.5,385.5 578.5,385.5 579.5,385.5 580.5,385.5 581.5,385.5 582.5,385.5 583.5,385.5 584.5,385.5 585.5,385.5 586.5,385.5 587.5,385.5 588.5,385.5 589.5,385.5 590.5,385.5 591.5,385.5 592.5,385.5 593.5,385.5 594.5,385.5 595.5,384.5 596.5,384.5 597.5,384.5 598.5,384.5 599.5,384.5 600.5,384.5 601.5,384.5 602.5,384.5 603.5,384.5 604.5,384.5 605.5,384.5 606.5,384.5 607.5,384.5 608.5,384.5 609.5,384.5 610.5,384.5 611.5,384.5 612.5,384.5 613.5,384.5 614.5,384.5 615.5,384.5 616.5,383.5 617.5,383.5 618.5,383.5 619.5,383.5 620.5,383.5 621.5,383.5 622.5,383.5 623.5,383.5 624.5,383.5 625.5,383.5 626.5,383.5 627.5,383.5 628.5,383.5 629.5,383.5 630.5,383.5 631.5,383.5 632.5,383.5 633.5,383.5 634.5,383.5 635.5,383.5 636.5,383.5 637.5,382.5 638.5,382.5 639.5,382.5 640.5,382.5" fill="none" stroke="#e0e0e0" stroke-width="1.0"/>
<polyline points="34.5,408.5 35.5,408.5 36.5,408.5 37.5,408.5 38.5,408.5 39.5,408.5 40.5,407.5 41.5,407.5 42.5,407.5 43.5,407.5 44.5,407.5 45.5,407.5 46.5,407.5 47.5,407.5 48.5,407.5 49.5,407.5 50.5,407.5 51.5,407.5 52.5,407.5 53.5,407.5 54.5,406.5 55.5,406.5 56.5,406.5 57.5,406.5 58.5,406.5 59.5,406.5 60.5,406.5 61.5,406.5 62.5,406.5 63.5,406.5 64.5,406.5 65.5,406.5 66.5,406.5 67.5,406.5 68.5,405.5 69.5,405.5 70.5,405.5 71.5,405.5 72.5,405.5 73.5,405.5 74.5,405.5 75.5,405.5 76.5,405.5 77.5,405.5 78.5,405.5 79.5,405.5 80.5,405.5 81.5,405.5 82.5,404.5 83.5,404.5 84.5,404.5 85.5,404.5 86.5,404.5 87.5,404.5 88.5,404.5 89.5,404.5 90.5,404.5 91.5,404.5 92.5,404.5 93.5,404.5 94.5,404.5 95.5,404.5 96.5,403.5 97.5,403.5 98.5,403.5 99.5,403.5 100.5,403.5 101.5,403.5 102.5,403.5 103.5,403.5 104.5,403.5 105.5,403.5 106.5,403.5 107.5,403.5 108.5,403.5 109.5,403.5 110.5,402.5 111.5,402.5 112.5,402.5 113.5,402.5 114.5,402.5 115.5,402.5 116.5,402.5 117.5,402.5 118.5,402.5 119.5,402.5 120.5,402.5 121.5,402.5 122.5,402.5 123.5,402.5 124.5,401.5 125.5,401.5 126.5,401.5 127.5,401.5 128.5,401.5 129.5,401.5 130.5,401.5 131.5,401.5 132.5,401.5 133.5,401.5 134.5,401.5 135.5,401.5 136.5,401.5 137.5,401.5 138.5,400.5 139.5,400.5 140.5,400.5 141.5,400.5 142.5,400.5 143.5,400.5 144.5,400.5 145.5,400.5 146.5,400.5 147.5,400.5 148.5,400.5 149.5,400.5 150.5,400.5 151.5,400.5 152.5,400.5 153.5,400.5 154.5,400.5 155.5,400.5 156.5,400.5 157.5,400.5 158.5,400.5 159.5,400.5 160.5,400.5 161.5,400.5 162.5,400.5 163.5,400.5 164.5,400.5 165.5,400.5 166.5,400.5 167.5,400.5 168.5,400.5 169.5,400.5 170.5,400.5 171.5,400.5 172.5,400.5 173.5,400.5 173.5,410.5 174.5,410.5 175.5,410.5 176.5,410.5 177.5,410.5 178.5,410.5 179.5,410.5 180.5,410.5 181.5,410.5 182.5,410.5 183.5,410.5 184.5,410.5 185.5,410.5 186.5,410.5 187.5,409.5 188.5,409.5 189.5,409.5 190.5,409.5 191.5,409.5 192.5,409.5 193.5,409.5 194.5,409.5 195.5,409.5 196.5,409.5 197.5,409.5 198.5,409.5 199.5,409.5 200.5,409.5 201.5,408.5 202.5,408.5 203.5,408.5 204.5,408.5 205.5,408.5 206.5,408.5 207.5,408.5 208.5,408.5 209.5,408.5 210.5,408.5 211.5,408.5 212.5,408.5 213.5,408.5 214.5,408.5 215.5,407.5 216.5,407.5 217.5,407.5 218.5,407.5 219.5,407.5 220.5,407.5 221.5,407.5 222.5,407.5 223.5,407.5 224.5,407.5 225.5,407.5 226.5,407.5 227.5,407.5 228.5,407.5 229.5,406.5 230.5,406.5 231.5,406.5 232.5,406.5 233.5,406.5 234.5,406.5 235.5,406.5 236.5,406.5 237.5,406.5 238.5,406.5 239.5,406.5 240.5,406.5 241.5,406.5 242.5,406.5 243.5,405.5 244.5,405.5 245.5,405.5 246.5,405.5 247.5,405.5 248.5,405.5 249.5,405.5 250.5,405.5 251.5,405.5 252.5,405.5 253.5,405.5 254.5,405.5 255.5,405.5 256.5,405.5 257.5,404.5 258.5,404.5 259.5,404.5 260.5,404.5 261.5,404.5 262.5,404.5 263.5,404.5 264.5,404.5 265.5,404.5 266.5,404.5 267.5,404.5 268.5,404.5 269.5,404.5 270.5,404.5 271.5,403.5 272.5,403.5 273.5,403.5 274.5,403.5 275.5,403.5 276.5,403.5 277.5,403.5 278.5,403.5 279.5,403.5 280.5,403.5 281.5,403.5 282.5,403.5 283.5,403.5 284.5,403.5 285.5,402.5 286.5,402.5 287.5,402.5 288.5,402.5 289.5,402.5 290.5,402.5 291.5,402.5 292.5,402.5 293.5,402.5 294.5,402.5 295.5,402.5 296.5,402.5 297.5,402.5 298.5,402.5 299.5,401.5 300.5,401.5 301.5,401.5 302.5,401.5 303.5,401.5 304.5,401.5 305.5,401.5 306.5,401.5 307.5,401.5 308.5,401.5 309.5,401.5 310.5,401.5 311.5,401.5 312.5,401.5 313.5,400.5 314.5,400.5 315.5,400.5 316.5,400.5 317.5,400.5 318.5,400.5 319.5,400.5 320.5,400.5 321.5,400.5 322.5,400.5 323.5,400.5 324.5,400.5 325.5,400.5 326.5,400.5 327.5,400.5 328.5,400.5 329.5,400.5 330.5,400.5 331.5,400.5 332.5,400.5 333.5,400.5 334.5,400.5 335.5,400.5 336.5,400.5 337.5,400.5 338.5,400.5 339.5,400.5 340.5,400.5 341.5,400.5 342.5,400.5 343.5,400.5 344.5,400.5 345.5,400.5 346.5,400.5 347.5,400.5 348.5,400.5 348.5,410.5 349.5,410.5 350.5,410.5 351.5,410.5 352.5,410.5 353.5,410.5 354.5,410.5 355.5,410.5 356.5,410.5 357.5,410.5 358.5,410.5 359.5,410.5 360.5,410.5 361.5,410.5 362.5,409.5 363.5,409.5 364.5,409.5 365.5,409.5 366.5,409.5 367.5,409.5 368.5,409.5 369.5,409.5 370.5,409.5 371.5,409.5 372.5,409.5 373.5,409.5 374.5,409.5 375.5,409.5 376.5,408.5 377.5,408.5 378.5,408.5 379.5,408.5 380.5,408.5 381.5,408.5 382.5,408.5 383.5,408.5 384.5,408.5 385.5,408.5 386.5,408.5 387.5,408.5 388.5,408.5 389.5,408.5 390.5,407.5 391.5,407.5 392.5,407.5 393.5,407.5 394.5,407.5 395.5,407.5 396.5,407.5 397.5,407.5 398.5,407.5 399.5,407.5 400.5,407.5 401.5,407.5 402.5,407.5 403.5,407.5 404.5,406.5 405.5,406.5 406.5,406.5 407.5,406.5 408.5,406.5 409.5,406.5 410.5,406.5 411.5,406.5 412.5,406.5 413.5,406.5 414.5,406.5 415.5,406.5 416.5,406.5 417.5,406.5 418.5,405.5 419.5,405.5 420.5,405.5 421.5,405.5 422.5,405.5 423.5,405.5 424.5,405.5 425.5,405.5 426.5,405.5 427.5,405.5 428.5,405.5 429.5,405.5 430.5,405.5 431.5,405.5 432.5,405.5 433.5,404.5 434.5,404.5 435.5,404.5 436.5,404.5 437.5,404.5 438.5,404.5 439.5,404.5 440.5,404.5 441.5,404.5 442.5,404.5 443.5,404.5 444.5,404.5 445.5,404.5 446.5,404.5 447.5,403.5 448.5,403.5 449.5,403.5 450.5,403.5 451.5,403.5 452.5,403.5 453.5,403.5 454.5,403.5 455.5,403.5 456.5,403.5 457.5,403.5 458.5,403.5 459.5,403.5 460.5,403.5 461.5,402.5 462.5,402.5 463.5,402.5 464.5,402.5 465.5,402.5 466.5,402.5 467.5,402.5 468.5,402.5 469.5,402.5 470.5,402.5 471.5,402.5 472.5,402.5 473.5,402.5 474.5,402.5 475.5,401.5 476.5,401.5 477.5,401.5 478.5,401.5 479.5,401.5 480.5,401.5 481.5,401.5 482.5,401.5 483.5,401.5 484.5,401.5 485.5,401.5 486.5,401.5 487.5,401.5 488.5,401.5 489.5,400.5 490.5,400.5 491.5,400.5 492.5,400.5 493.5,400.5 494.5,400.5 495.5,400.5 496.5,400.5 497.5,400.5 498.5,400.5 499.5,400.5 500.5,400.5 501.5,400.5 502.5,400.5 503.5,400.5 504.5,400.5 505.5,400.5 506.5,400.5 507.5,400.5 508.5,400.5 509.5,400.5 510.5,400.5 511.5,400.5 512.5,400.5 513.5,400.5 514.5,400.5 515.5,400.5 516.5,400.5 517.5,400.5 518.5,400.5 519.5,400.5 520.5,400.5 521.5,400.5 522.5,400.5 523.5,400.5 524.5,400.5 524.5,410.5 525.5,410.5 526.5,410.5 527.5,410.5 528.5,410.5 529.5,410.5 530.5,410.5 531.5,410.5 532.5,410.5 533.5,410.5 534.5,410.5 535.5,410.5 536.5,410.5 537.5,410.5 538.5,409.5 539.5,409.5 540.5,409.5 541.5,409.5 542.5,409.5 543.5,409.5 544.5,409.5 545.5,409.5 546.5,409.5 547.5,409.5 548.5,409.5 549.5,409.5 550.5,409.5 551.5,409.5 552.5,408.5 553.5,408.5 554.5,408.5 555.5,408.5 556.5,408.5 557.5,408.5 558.5,408.5 559.5,408.5 560.5,408.5 561.5,408.5 562.5,408.5 563.5,408.5 564.5,408.5 565.5,408.5 566.5,407.5 567.5,407.5 568.5,407.5 569.5,407.5 570.5,407.5 571.5,407.5 572.5,407.5 573.5,407.5 574.5,407.5 575.5,407.5 576.5,407.5 577.5,407.5 578.5,407.5 579.5,407.5 580.5,406.5 581.5,406.5 582.5,406.5 583.5,406.5 584.5,406.5 585.5,406.5 586.5,406.5 587.5,406.5 588.5,406.5 589.5,406.5 590.5,406.5 591.5,406.5 592.5,406.5 593.5,406.5 594.5,405.5 595.5,405.5 596.5,405.5 597.5,405.5 598.5,405.5 599.5,405.5 600.5,405.5 601.5,405.5 602.5,405.5 603.5,405.5 604.5,405.5 605.5,405.5 606.5,405.5 607.5,405.5 608.5,404.5 609.5,404.5 610.5,404.5 611.5,404.5 612.5,404.5 613.5,404.5 614.5,404.5 615.5,404.5 616.5,404.5 617.5,404.5 618.5,404.5 619.5,404.5 620.5,404.5 621.5,404.5 622.5,403.5 623.5,403.5 624.5,403.5 625.5,403.5 626.5,403.5 627.5,403.5 628.5,403.5 629.5,403.5 630.5,403.5 631.5,403.5 632.5,403.5 633.5,403.5 634.5,403.5 635.5,403.5 636.5,402.5 637.5,402.5 638.5,402.5 639.5,402.5 640.5,402.5" fill="none" stroke="#3e4c98" stroke-width="1.0"/>
<polyline points="34.5,465.5 35.5,465.5 36.5,465.5 37.5,465.5 38.5,465.5 39.5,465.5 40.5,465.5 41.5,465.5 42.5,465.5 43.5,464.5 44.5,464.5 45.5,464.5 46.5,464.5 47.5,464.5 48.5,464.5 49.5,464.5 50.5,464.5 51.5,464.5 52.5,464.5 53.5,464.5 54.5,464.5 55.5,463.5 56.5,463.5 57.5,463.5 58.5,463.5 59.5,463.5 60.5,463.5 61.5,463.5 62.5,463.5 63.5,463.5 64.5,463.5 65.5,463.5 66.5,463.5 67.5,462.5 68.5,462.5 69.5,462.5 70.5,462.5 71.5,462.5 72.5,462.5 73.5,462.5 74.5,462.5 75.5,462.5 76.5,462.5 77.5,462.5 78.5,462.5 79.5,461.5 80.5,461.5 81.5,461.5 82.5,461.5 83.5,461.5 84.5,461.5 85.5,461.5 86.5,461.5 87.5,461.5 88.5,461.5 89.5,461.5 90.5,461.5 91.5,460.5 92.5,460.5 93.5,460.5 94.5,460.5 95.5,460.5 96.5,460.5 97.5,460.5 98.5,460.5 99.5,460.5 100.5,460.5 101.5,460.5 102.5,460.5 103.5,459.5 104.5,459.5 105.5,459.5 106.5,459.5 107.5,459.5 108.5,459.5 109.5,459.5 110.5,459.5 111.5,459.5 112.5,459.5 113.5,459.5 114.5,459.5 115.5,458.5 116.5,458.5 117.5,458.5 118.5,458.5 119.5,458.5 120.5,458.5 121.5,458.5 122.5,458.5 123.5,458.5 124.5,458.5 125.5,458.5 126.5,458.5 127.5,457.5 128.5,457.5 129.5,457.5 130.5,457.5 131.5,457.5 132.5,457.5 133.5,457.5 134.5,457.5 135.5,457.5 136.5,457.5 137.5,457.5 138.5,457.5 139.5,456.5 140.5,456.5 141.5,456.5 142.5,456.5 143.5,456.5 144.5,456.5 145.5,456.5 146.5,456.5 147.5,456.5 148.5,456.5 149.5,456.5 150.5,456.5 151.5,456.5 152.5,456.5 153.5,456.5 154.5,456.5 155.5,456.5 156.5,456.5 157.5,456.5 158.5,456.5 159.5,456.5 160.5,456.5 161.5,456.5 162.5,456.5 163.5,456.5 164.5,456.5 165.5,456.5 166.5,456.5 167.5,456.5 168.5,456.5 169.5,456.5 170.5,456.5 171.5,456.5 172.5,456.5 173.5,456.5 173.5,468.5 174.5,468.5 175.5,468.5 176.5,468.5 177.5,468.5 178.5,468.5 179.5,468.5 180.5,468.5 181.5,468.5 182.5,468.5 183.5,467.5 184.5,467.5 185.5,467.5 186.5,467.5 187.5,467.5 188.5,467.5 189.5,467.5 190.5,467.5 191.5,467.5 192.5,467.5 193.5,467.5 194.5,467.5 195.5,466.5 196.5,466.5 197.5,466.5 198.5,466.5 199.5,466.5 200.5,466.5 201.5,466.5 202.5,466.5 203.5,466.5 204.5,466.5 205.5,466.5 206.5,466.5 207.5,465.5 208.5,465.5 209.5,465.5 210.5,465.5 211.5,465.5 212.5,465.5 213.5,465.5 214.5,465.5 215.5,465.5 216.5,465.5 217.5,465.5 218.5,465.5 219.5,464.5 220.5,464.5 221.5,464.5 222.5,464.5 223.5,464.5 224.5,464.5 225.5,464.5 226.5,464.5 227.5,464.5 228.5,464.5 229.5,464.5 230.5,464.5 231.5,463.5 232.5,463.5 233.5,463.5 234.5,463.5 235.5,463.5 236.5,463.5 237.5,463.5 238.5,463.5 239.5,463.5 240.5,463.5 241.5,463.5 242.5,463.5 243.5,462.5 244.5,462.5 245.5,462.5 246.5,462.5 247.5,462.5 248.5,462.5 249.5,462.5 250.5,462.5 251.5,462.5 252.5,462.5 253.5,462.5 254.5,462.5 255.5,461.5 256.5,461.5 257.5,461.5 258.5,461.5 259.5,461.5 260.5,461.5 261.5,461.5 262.5,461.5 263.5,461.5 264.5,461.5 265.5,461.5 266.5,461.5 267.5,460.5 268.5,460.5 269.5,460.5 270.5,460.5 271.5,460.5 272.5,460.5 273.5,460.5 274.5,460.5 275.5,460.5 276.5,460.5 277.5,460.5 278.5,460.5 279.5,459.5 280.5,459.5 281.5,459.5 282.5,459.5 283.5,459.5 284.5,459.5 285.5,459.5 286.5,459.5 287.5,459.5 288.5,459.5 289.5,459.5 290.5,459.5 291.5,458.5 292.5,458.5 293.5,458.5 294.5,458.5 295.5,458.5 296.5,458.5 297.5,458.5 298.5,458.5 299.5,458.5 300.5,458.5 301.5,458.5 302.5,458.5 303.5,457.5 304.5,457.5 305.5,457.5 306.5,457.5 307.5,457.5 308.5,457.5 309.5,457.5 310.5,457.5 311.5,457.5 312.5,457.5 313.5,457.5 314.5,457.5 315.5,456.5 316.5,456.5 317.5,456.5 318.5,456.5 319.5,456.5 320.5,456.5 321.5,456.5 322.5,456.5 323.5,456.5 324.5,456.5 325.5,456.5 326.5,456.5 327.5,456.5 328.5,456.5 329.5,456.5 330.5,456.5 331.5,456.5 332.5,456.5 333.5,456.5 334.5,456.5 335.5,456.5 336.5,456.5 337.5,456.5 338.5,456.5 339.5,456.5 340.5,456.5 341.5,456.5 342.5,456.5 343.5,456.5 344.5,456.5 345.5,456.5 346.5,456.5 347.5,456.5 348.5,456.5 348.5,468.5 349.5,468.5 350.5,468.5 351.5,468.5 352.5,468.5 353.5,468.5 354.5,468.5 355.5,468.5 356.5,468.5 357.5,468.5 358.5,467.5 359.5,467.5 360.5,467.5 361.5,467.5 362.5,467.5 363.5,467.5 364.5,467.5 365.5,467.5 366.5,467.5 367.5,467.5 368.5,467.5 369.5,467.5 370.5,466.5 371.5,466.5 372.5,466.5 373.5,466.5 374.5,466.5 375.5,466.5 376.5,466.5 377.5,466.5 378.5,466.5 379.5,466.5 380.5,466.5 381.5,466.5 382.5,465.5 383.5,465.5 384.5,465.5 385.5,465.5 386.5,465.5 387.5,465.5 388.5,465.5 389.5,465.5 390.5,465.5 391.5,465.5 392.5,465.5 393.5,465.5 394.5,464.5 395.5,464.5 396.5,464.5 397.5,464.5 398.5,464.5 399.5,464.5 400.5,464.5 401.5,464.5 402.5,464.5 403.5,464.5 404.5,464.5 405.5,464.5 406.5,463.5 407.5,463.5 408.5,463.5 409.5,463.5 410.5,463.5 411.5,463.5 412.5,463.5 413.5,463.5 414.5,463.5 415.5,463.5 416.5,463.5 417.5,463.5 418.5,462.5 419.5,462.5 420.5,462.5 421.5,462.5 422.5,462.5 423.5,462.5 424.5,462.5 425.5,462.5 426.5,462.5 427.5,462.5 428.5,462.5 429.5,462.5 430.5,461.5 431.5,461.5 432.5,461.5 433.5,461.5 434.5,461.5 435.5,461.5 436.5,461.5 437.5,461.5 438.5,461.5 439.5,461.5 440.5,461.5 441.5,461.5 442.5,460.5 443.5,460.5 444.5,460.5 445.5,460.5 446.5,460.5 447.5,460.5 448.5,460.5 449.5,460.5 450.5,460.5 451.5,460.5 452.5,460.5 453.5,460.5 454.5,459.5 455.5,459.5 456.5,459.5 457.5,459.5 458.5,459.5 459.5,459.5 460.5,459.5 461.5,459.5 462.5,459.5 463.5,459.5 464.5,459.5 465.5,459.5 466.5,458.5 467.5,458.5 468.5,458.5 469.5,458.5 470.5,458.5 471.5,458.5 472.5,458.5 473.5,458.5 474.5,458.5 475.5,458.5 476.5,458.5 477.5,458.5 478.5,457.5 479.5,457.5 480.5,457.5 481.5,457.5 482.5,457.5 483.5,457.5 484.5,457.5 485.5,457.5 486.5,457.5 487.5,457.5 488.5,457.5 489.5,457.5 490.5,456.5 491.5,456.5 492.5,456.5 493.5,456.5 494.5,456.5 495.5,456.5 496.5,456.5 497.5,456.5 498.5,456.5 499.5,456.5 500.5,456.5 501.5,456.5 502.5,456.5 503.5,456.5 504.5,456.5 505.5,456.5 506.5,456.5 507.5,456.5 508.5,456.5 509.5,456.5 510.5,456.5 511.5,456.5 512.5,456.5 513.5,456.5 514.5,456.5 515.5,456.5 516.5,456.5 517.5,456.5 518.5,456.5 519.5,456.5 520.5,456.5 521.5,456.5 522.5,456.5 523.5,456.5 524.5,456.5 524.5,468.5 525.5,468.5 526.5,468.5 527.5,468.5 528.5,468.5 529.5,468.5 530.5,468.5 531.5,468.5 532.5,468.5 533.5,467.5 534.5,467.5 535.5,467.5 536.5,467.5 537.5,467.5 538.5,467.5 539.5,467.5 540.5,467.5 541.5,467.5 542.5,467.5 543.5,467.5 544.5,467.5 545.5,466.5 546.5,466.5 547.5,466.5 548.5,466.5 549.5,466.5 550.5,466.5 551.5,466.5 552.5,466.5 553.5,466.5 554.5,466.5 555.5,466.5 556.5,466.5 557.5,465.5 558.5,465.5 559.5,465.5 560.5,465.5 561.5,465.5 562.5,465.5 563.5,465.5 564.5,465.5 565.5,465.5 566.5,465.5 567.5,465.5 568.5,465.5 569.5,464.5 570.5,464.5 571.5,464.5 572.5,464.5 573.5,464.5 574.5,464.5 575.5,464.5 576.5,464.5 577.5,464.5 578.5,464.5 579.5,464.5 580.5,464.5 581.5,463.5 582.5,463.5 583.5,463.5 584.5,463.5 585.5,463.5 586.5,463.5 587.5,463.5 588.5,463.5 589.5,463.5 590.5,463.5 591.5,463.5 592.5,463.5 593.5,462.5 594.5,462.5 595.5,462.5 596.5,462.5 597.5,462.5 598.5,462.5 599.5,462.5 600.5,462.5 601.5,462.5 602.5,462.5 603.5,462.5 604.5,462.5 605.5,461.5 606.5,461.5 607.5,461.5 608.5,461.5 609.5,461.5 610.5,461.5 611.5,461.5 612.5,461.5 613.5,461.5 614.5,461.5 615.5,461.5 616.5,461.5 617.5,460.5 618.5,460.5 619.5,460.5 620.5,460.5 621.5,460.5 622.5,460.5 623.5,460.5 624.5,460.5 625.5,460.5 626.5,460.5 627.5,460.5 628.5,460.5 629.5,459.5 630.5,459.5 631.5,459.5 632.5,459.5 633.5,459.5 634.5,459.5 635.5,459.5 636.5,459.5 637.5,459.5 638.5,459.5 639.5,459.5 640.5,459.5" fill="none" stroke="#d0d0d0" stroke-width="1.0"/>
<path d="M641.5,71 L650.5,64.2 L698,64.2 L698,77.8 L650.5,77.8 Z" fill="#40a8f0"/>
<path d="M641.5,87.6 L650.5,80.8 L698,80.8 L698,94.39999999999999 L650.5,94.39999999999999 Z" fill="#ffd020"/>
<path d="M641.5,101.5 L650.5,94.7 L698,94.7 L698,108.3 L650.5,108.3 Z" fill="#30b080"/>
<path d="M641.5,115.5 L650.5,108.7 L698,108.7 L698,122.3 L650.5,122.3 Z" fill="#f09030"/>
<path d="M641.5,142.5 L650.5,135.7 L698,135.7 L698,149.3 L650.5,149.3 Z" fill="#5060c0"/>
<path d="M641.5,156.5 L650.5,149.7 L698,149.7 L698,163.3 L650.5,163.3 Z" fill="#e82030"/>
<path d="M641.5,170.2 L650.5,163.39999999999998 L698,163.39999999999998 L698,177.0 L650.5,177.0 Z" fill="#c090d0"/>
<path d="M641.5,197.2 L650.5,190.39999999999998 L698,190.39999999999998 L698,204.0 L650.5,204.0 Z" fill="#e02040"/>
<path d="M641.5,211.5 L650.5,204.7 L698,204.7 L698,218.3 L650.5,218.3 Z" fill="#f8f010"/>
<path d="M641.5,230.6 L650.5,223.79999999999998 L698,223.79999999999998 L698,237.4 L650.5,237.4 Z" fill="#20a848"/>
<path d="M641.5,252 L650.5,245.2 L698,245.2 L698,258.8 L650.5,258.8 Z" fill="#e88030"/>
<path d="M641.5,266.5 L650.5,259.7 L698,259.7 L698,273.3 L650.5,273.3 Z" fill="#c060c0"/>
<path d="M641.5,327.6 L650.5,320.8 L698,320.8 L698,334.40000000000003 L650.5,334.40000000000003 Z" fill="#e040a0"/>
<path d="M641.5,383.2 L650.5,376.4 L698,376.4 L698,390.0 L650.5,390.0 Z" fill="#f0f0f0"/>
<path d="M641.5,403.2 L650.5,396.4 L698,396.4 L698,410.0 L650.5,410.0 Z" fill="#3858b8"/>
<path d="M641.5,459.7 L650.5,452.9 L698,452.9 L698,466.5 L650.5,466.5 Z" fill="#d0d0d0"/>
<rect x="644.5" y="467.5" width="53.5" height="25.5" rx="3" fill="#383838" stroke="#555"/>
<rect x="644.5" y="495" width="24.5" height="26.5" rx="3" fill="#2c2c2c" stroke="#484848"/>
<path d="M653.2,500.5 V511.7 H649.7 L657.5,519.5 L665.2,511.7 H661.8 V500.5 Z" fill="none" stroke="#6e6e6e" stroke-width="1.1"/>
<rect x="672" y="495" width="26" height="26.5" rx="3" fill="#a4a4a4"/>
<path d="M675.7,509 L681.5,504 V506.8 H689.6 V504 L695.4,509 L689.6,514 V511.2 H681.5 V514 Z" fill="#fafafa" stroke="#444" stroke-width="0.7"/>
<path d="M644,285.5 H648.5 V294" stroke="#c8c8c8" stroke-width="1" fill="none"/>
<path d="M644,306.5 H648.5 V299" stroke="#c8c8c8" stroke-width="1" fill="none"/>
<rect x="649" y="293" width="5.6" height="6.5" fill="#e8e8e8"/>
<rect x="655" y="293" width="6" height="6.5" fill="#e8e8e8"/>
<rect x="650.5" y="294.5" width="2.5" height="1.5" fill="#555"/><rect x="650.5" y="296.5" width="2.5" height="1.5" fill="#555"/>
<rect x="657" y="294" width="2" height="3" fill="#666"/>
<path d="M644,352.5 H648.5 V361" stroke="#c8c8c8" stroke-width="1" fill="none"/>
<path d="M644,373.5 H648.5 V366" stroke="#c8c8c8" stroke-width="1" fill="none"/>
<rect x="649" y="360" width="5.6" height="6.5" fill="#e8e8e8"/>
<rect x="655" y="360" width="6" height="6.5" fill="#e8e8e8"/>
<rect x="650.5" y="361.5" width="2.5" height="1.5" fill="#555"/><rect x="650.5" y="363.5" width="2.5" height="1.5" fill="#555"/>
<rect x="657" y="361" width="2" height="3" fill="#666"/>
<path d="M644,420.5 H648.5 V429" stroke="#c8c8c8" stroke-width="1" fill="none"/>
<path d="M644,441.5 H648.5 V434" stroke="#c8c8c8" stroke-width="1" fill="none"/>
<rect x="649" y="428" width="5.6" height="6.5" fill="#e8e8e8"/>
<rect x="655" y="428" width="6" height="6.5" fill="#e8e8e8"/>
<rect x="650.5" y="429.5" width="2.5" height="1.5" fill="#555"/><rect x="650.5" y="431.5" width="2.5" height="1.5" fill="#555"/>
<rect x="657" y="429" width="2" height="3" fill="#666"/>
<path d="M644,487.5 H648.5 V496" stroke="#c8c8c8" stroke-width="1" fill="none"/>
<path d="M644,508.5 H648.5 V501" stroke="#c8c8c8" stroke-width="1" fill="none"/>
<rect x="649" y="495" width="5.6" height="6.5" fill="#e8e8e8"/>
<rect x="655" y="495" width="6" height="6.5" fill="#e8e8e8"/>
<rect x="650.5" y="496.5" width="2.5" height="1.5" fill="#555"/><rect x="650.5" y="498.5" width="2.5" height="1.5" fill="#555"/>
<rect x="657" y="496" width="2" height="3" fill="#666"/>
<rect x="33.5" y="512.5" width="607" height="10" rx="3" fill="#1a1a1a" stroke="#3a3a3a"/>
<rect x="48" y="513.6" width="16" height="7.5" rx="2.5" fill="#b4b4b4"/>
</svg>
<div class="a" style="left:237px;top:533px;width:1px;height:15.5px;background:#777"></div>
<div class="a" style="left:406px;top:533px;width:1px;height:15.5px;background:#777"></div>
<div class="a" style="left:512px;top:533px;width:1px;height:15.5px;background:#777"></div>
<svg class="a" style="left:0;top:0" width="800" height="640">
<circle cx="425.9" cy="542.2" r="7.3" fill="none" stroke="#333" stroke-width="1.1"/>
<path d="M423,537.5 L430.5,542.2 L423,547 Z" fill="none" stroke="#333" stroke-width="1.1"/>
<path d="M559,540.5 Q568.5,537.5 578,540.5" fill="none" stroke="#222" stroke-width="1.1"/>
<path d="M556.75,542 L562,537.5 L562.5,542 Z M580,542 L575,537.5 L574.5,542 Z" fill="#222"/>
<path d="M559,555.5 Q568.5,552.5 578,555.5" fill="none" stroke="#222" stroke-width="1.1"/>
<path d="M556.75,557 L562,552.5 L562.5,557 Z M580,557 L575,552.5 L574.5,557 Z" fill="#222"/>
<g transform="translate(648.5,542) rotate(-47)"><rect x="-12" y="-5" width="17.5" height="10" rx="4.5" fill="#111"/><rect x="5" y="-3.3" width="6" height="6.6" fill="#ddd" stroke="#111" stroke-width="1.1"/></g>
<text transform="translate(36.25,302.50) scale(0.987,1)" font-size="12" font-family="'Liberation Sans', sans-serif" font-weight="normal" fill="#d04898">CH1-2</text>
<text transform="translate(32.91,508.70) scale(1.086,1)" font-size="12" font-family="'Liberation Sans', sans-serif" font-weight="normal" fill="#c8c8c8">500ms</text>
<text transform="translate(139.00,508.70) scale(1.056,1)" font-size="12" font-family="'Liberation Sans', sans-serif" font-weight="normal" fill="#c8c8c8">700ms</text>
<text transform="translate(244.00,508.70) scale(1.056,1)" font-size="12" font-family="'Liberation Sans', sans-serif" font-weight="normal" fill="#c8c8c8">800ms</text>
<text transform="translate(349.50,508.70) scale(1.069,1)" font-size="12" font-family="'Liberation Sans', sans-serif" font-weight="normal" fill="#c8c8c8">900ms</text>
<text transform="translate(454.57,508.70) scale(1.033,1)" font-size="12" font-family="'Liberation Sans', sans-serif" font-weight="normal" fill="#c8c8c8">1s</text>
<text transform="translate(558.91,508.70) scale(1.091,1)" font-size="12" font-family="'Liberation Sans', sans-serif" font-weight="normal" fill="#c8c8c8">1.1s</text>
<text transform="translate(656.80,75.50) scale(1.012,1)" font-size="12" font-family="'Liberation Sans', sans-serif" font-weight="normal" fill="#10305a">CH1-1</text>
<text transform="translate(656.80,92.10) scale(1.012,1)" font-size="12" font-family="'Liberation Sans', sans-serif" font-weight="normal" fill="#402a00">CH1-3</text>
<text transform="translate(656.80,106.00) scale(0.983,1)" font-size="12" font-family="'Liberation Sans', sans-serif" font-weight="normal" fill="#0a3020">CH1-4</text>
<text transform="translate(656.80,120.00) scale(1.012,1)" font-size="12" font-family="'Liberation Sans', sans-serif" font-weight="normal" fill="#402000">CH2-1</text>
<text transform="translate(656.80,147.00) scale(1.012,1)" font-size="12" font-family="'Liberation Sans', sans-serif" font-weight="normal" fill="#1a1a50">CH2-3</text>
<text transform="translate(656.80,161.00) scale(0.983,1)" font-size="12" font-family="'Liberation Sans', sans-serif" font-weight="normal" fill="#400810">CH2-4</text>
<text transform="translate(656.80,174.70) scale(1.012,1)" font-size="12" font-family="'Liberation Sans', sans-serif" font-weight="normal" fill="#301838">CH3-1</text>
<text transform="translate(656.80,201.70) scale(1.012,1)" font-size="12" font-family="'Liberation Sans', sans-serif" font-weight="normal" fill="#400810">CH3-3</text>
<text transform="translate(656.80,216.00) scale(0.983,1)" font-size="12" font-family="'Liberation Sans', sans-serif" font-weight="normal" fill="#303000">CH3-4</text>
<text transform="translate(656.80,235.10) scale(1.012,1)" font-size="12" font-family="'Liberation Sans', sans-serif" font-weight="normal" fill="#083010">CH4-1</text>
<text transform="translate(656.80,256.50) scale(1.012,1)" font-size="12" font-family="'Liberation Sans', sans-serif" font-weight="normal" fill="#402000">CH4-3</text>
<text transform="translate(656.80,271.00) scale(0.983,1)" font-size="12" font-family="'Liberation Sans', sans-serif" font-weight="normal" fill="#301030">CH4-4</text>
<text transform="translate(656.80,332.10) scale(1.012,1)" font-size="12" font-family="'Liberation Sans', sans-serif" font-weight="normal" fill="#400828">CH1-2</text>
<text transform="translate(656.80,387.70) scale(1.012,1)" font-size="12" font-family="'Liberation Sans', sans-serif" font-weight="normal" fill="#202020">CH2-2</text>
<text transform="translate(656.80,407.70) scale(1.012,1)" font-size="12" font-family="'Liberation Sans', sans-serif" font-weight="normal" fill="#102060">CH3-2</text>
<text transform="translate(656.80,464.20) scale(1.012,1)" font-size="12" font-family="'Liberation Sans', sans-serif" font-weight="normal" fill="#202020">CH4-2</text>
<text transform="translate(653.37,483.75) scale(0.818,1)" font-size="11" font-family="'Liberation Sans', sans-serif" font-weight="normal" fill="#8a8a8a">ロジック</text>
<text transform="translate(640.50,293.10) scale(1.500,1)" font-size="10" font-family="'Liberation Serif', serif" font-weight="bold" fill="#f0f0f0">1</text>
<text transform="translate(641.50,305.95) scale(1.100,1)" font-size="10" font-family="'Liberation Serif', serif" font-weight="bold" fill="#f0f0f0">4</text>
<text transform="translate(640.50,360.10) scale(1.500,1)" font-size="10" font-family="'Liberation Serif', serif" font-weight="bold" fill="#f0f0f0">1</text>
<text transform="translate(641.50,372.95) scale(1.100,1)" font-size="10" font-family="'Liberation Serif', serif" font-weight="bold" fill="#f0f0f0">4</text>
<text transform="translate(640.50,428.10) scale(1.500,1)" font-size="10" font-family="'Liberation Serif', serif" font-weight="bold" fill="#f0f0f0">1</text>
<text transform="translate(641.50,440.95) scale(1.100,1)" font-size="10" font-family="'Liberation Serif', serif" font-weight="bold" fill="#f0f0f0">4</text>
<text transform="translate(640.50,495.10) scale(1.500,1)" font-size="10" font-family="'Liberation Serif', serif" font-weight="bold" fill="#f0f0f0">1</text>
<text transform="translate(641.50,507.95) scale(1.100,1)" font-size="10" font-family="'Liberation Serif', serif" font-weight="bold" fill="#f0f0f0">4</text>
<text transform="translate(78.10,12.10) scale(0.743,1)" font-size="12" font-family="'Liberation Sans', sans-serif" font-weight="normal" fill="#222" stroke="#222" stroke-width="0.25">サンプリング速度</text>
<text transform="translate(216.27,12.00) scale(0.729,1)" font-size="12" font-family="'Liberation Sans', sans-serif" font-weight="normal" fill="#222" stroke="#222" stroke-width="0.25">ポイント数</text>
<text transform="translate(435.75,11.50) scale(0.647,1)" font-size="12" font-family="'Liberation Sans', sans-serif" font-weight="normal" fill="#222" stroke="#222" stroke-width="0.25">モード</text>
<text transform="translate(115.48,34.30) scale(0.922,1)" font-size="12" font-family="'Liberation Sans', sans-serif" font-weight="normal" fill="#222">1 MS/s</text>
<text transform="translate(260.00,34.30) scale(0.923,1)" font-size="12" font-family="'Liberation Sans', sans-serif" font-weight="normal" fill="#6c6c6c">2.5 k</text>
<text transform="translate(345.00,34.00) scale(1.000,1)" font-size="12" font-family="'Liberation Sans', sans-serif" font-weight="normal" fill="#6c6c6c">任意設定</text>
<text transform="translate(445.40,32.50) scale(0.863,1)" font-size="12" font-family="'Liberation Sans', sans-serif" font-weight="normal" fill="#6c6c6c">単発</text>
<text transform="translate(574.11,36.25) scale(0.689,1)" font-size="8" font-family="'Liberation Sans', sans-serif" font-weight="normal" fill="#222" stroke="#222" stroke-width="0.3">シート6</text>
<text transform="translate(705.81,90.70) scale(0.623,1)" font-size="12" font-family="'Liberation Sans', sans-serif" font-weight="normal" fill="#222" stroke="#222" stroke-width="0.25">トレースカーソル</text>
<text transform="translate(717.00,134.40) scale(0.672,1)" font-size="12" font-family="'Liberation Sans', sans-serif" font-weight="normal" fill="#222" stroke="#222" stroke-width="0.25">横カーソル</text>
<text transform="translate(712.31,178.10) scale(0.694,1)" font-size="12" font-family="'Liberation Sans', sans-serif" font-weight="normal" fill="#222" stroke="#222" stroke-width="0.25">区間カーソル</text>
<text transform="translate(726.00,221.80) scale(0.686,1)" font-size="12" font-family="'Liberation Sans', sans-serif" font-weight="normal" fill="#222" stroke="#222" stroke-width="0.25">ゲージ</text>
<text transform="translate(725.34,266.00) scale(0.662,1)" font-size="12" font-family="'Liberation Sans', sans-serif" font-weight="normal" fill="#222" stroke="#222" stroke-width="0.25">ズーム</text>
<text transform="translate(710.70,309.20) scale(0.836,1)" font-size="12" font-family="'Liberation Sans', sans-serif" font-weight="normal" fill="#222" stroke="#222" stroke-width="0.25">CH位置調整</text>
<text transform="translate(713.35,352.90) scale(0.653,1)" font-size="12" font-family="'Liberation Sans', sans-serif" font-weight="normal" fill="#222" stroke="#222" stroke-width="0.25">オートレンジ</text>
<text transform="translate(438.10,539.83) scale(0.917,1)" font-size="12" font-family="'Liberation Sans', sans-serif" font-weight="normal" fill="#333">2017/09/15</text>
<text transform="translate(437.25,553.55) scale(0.852,1)" font-size="12" font-family="'Liberation Sans', sans-serif" font-weight="normal" fill="#333">14:22:17.067</text>
<text transform="translate(583.90,546.27) scale(0.900,1)" font-size="10" font-family="'Liberation Sans', sans-serif" font-weight="normal" fill="#222">表示位置</text>
<text transform="translate(566.20,535.60) scale(1.200,1)" font-size="7" font-family="'Liberation Sans', sans-serif" font-weight="normal" fill="#222">X</text>
<text transform="translate(566.20,550.00) scale(0.960,1)" font-size="7" font-family="'Liberation Sans', sans-serif" font-weight="normal" fill="#222">Y</text>
<text transform="translate(710.00,540.50) scale(0.917,1)" font-size="12" font-family="'Liberation Sans', sans-serif" font-weight="normal" fill="#333">2017/09/15</text>
<text transform="translate(717.67,554.75) scale(0.826,1)" font-size="12" font-family="'Liberation Sans', sans-serif" font-weight="normal" fill="#333">14:26:44</text>
</svg>
<svg width="800" height="63" style="position:absolute;left:0;top:577px">
<defs><linearGradient id="bg" x1="28" y1="0" x2="781" y2="0" gradientUnits="userSpaceOnUse">
<stop offset="0" stop-color="#94c8f4"/><stop offset="0.12" stop-color="#88b8e6"/><stop offset="0.45" stop-color="#5476c2"/>
<stop offset="0.75" stop-color="#3a54a4"/><stop offset="1" stop-color="#283a8a"/></linearGradient></defs>
<path d="M28,0 L742.5,0 L781,32 L742.5,64 L28,64 L41.6,32 Z" fill="url(#bg)"/>
<path d="M47.4,0 L53.6,0 L66.9,32 L53.6,64 L47.4,64 L60.7,32 Z" fill="#fff"/>
<path d="M72.8,0 L79.4,0 L92.7,32 L79.4,64 L72.8,64 L86.1,32 Z" fill="#fff"/>
<g transform="translate(0,-577)" fill="#fff" stroke="#fff" stroke-width="0.4" font-family="'Liberation Sans', sans-serif">
<text x="103.00" y="620" font-size="32">即</text><text x="141.25" y="620" font-size="32">便</text><text x="176.75" y="620" font-size="32">1</text><text x="200.50" y="620" font-size="32">M</text><text x="229.25" y="620" font-size="32">S</text><text x="253.75" y="620" font-size="32">/</text><text x="271.50" y="620" font-size="32">s</text><text x="304.00" y="620" font-size="32">3</text><text x="325.25" y="620" font-size="32">2</text><text x="347.75" y="620" font-size="32">c</text><text x="371.75" y="620" font-size="32">h</text><text x="383.50" y="620" font-size="32">，</text><text x="433.75" y="620" font-size="32">也</text><text x="470.00" y="620" font-size="32">能</text><text x="505.50" y="620" font-size="32">1</text><text x="528.75" y="620" font-size="32">小</text><text x="564.25" y="620" font-size="32">时</text><text x="601.50" y="620" font-size="32">连</text><text x="638.75" y="620" font-size="32">续</text><text x="676.25" y="620" font-size="32">记</text><text x="712.50" y="620" font-size="32">录</text>
</g></svg>
</body></html>
